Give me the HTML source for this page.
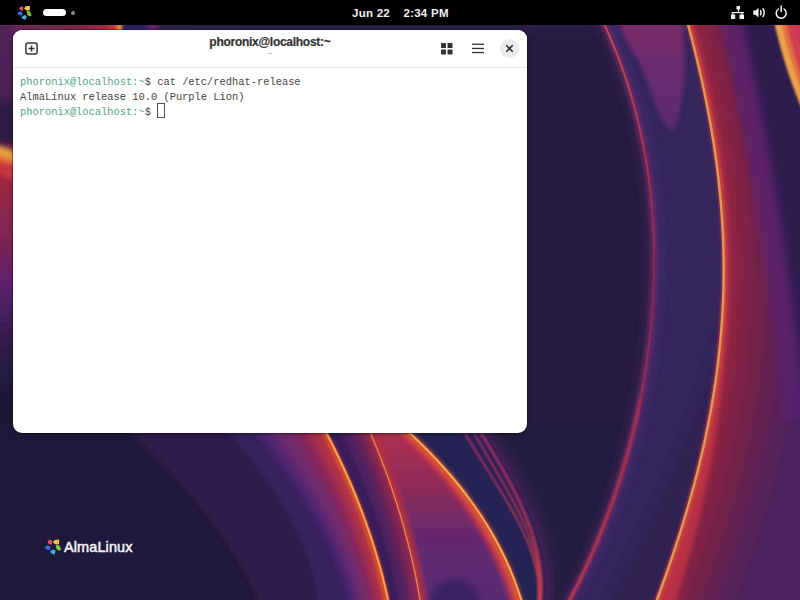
<!DOCTYPE html>
<html><head><meta charset="utf-8">
<style>
html,body{margin:0;padding:0;width:800px;height:600px;overflow:hidden;background:#221a3c;}
body{position:relative;font-family:"Liberation Sans",sans-serif;}
#bg{position:absolute;left:0;top:0;width:800px;height:600px;}
#bar{position:absolute;left:0;top:0;width:800px;height:25px;background:#000;color:#fff;}
.clock{position:absolute;top:6px;font-weight:bold;font-size:11.5px;letter-spacing:0.25px;line-height:14px;color:#f0f0f0;}
#win{position:absolute;left:13px;top:30px;width:513.8px;height:403px;background:#fff;border-radius:9px;overflow:hidden;box-shadow:0 0 0 1px rgba(10,5,25,0.35),0 2px 4px rgba(0,0,0,0.25);}
#hdr{position:absolute;left:0;top:0;width:100%;height:36.5px;background:#fff;border-bottom:1px solid #e9e9e9;}
#title{position:absolute;left:0;width:100%;top:4.5px;text-align:center;font-weight:bold;font-size:12px;letter-spacing:-0.28px;color:#333;-webkit-text-stroke:0.2px #333;}
#sub{position:absolute;left:0;width:100%;top:19px;text-align:center;font-size:8px;color:#888;}
#term{position:absolute;left:7px;top:44.7px;font-family:"Liberation Mono",monospace;font-size:10.4px;line-height:15px;color:#454545;white-space:pre;}
.g{color:#55a386;}
#cursor{position:absolute;left:144px;top:72.6px;width:8px;height:15.8px;border:1px solid #505050;box-sizing:border-box;}
#logo{position:absolute;left:45px;top:537px;}
#logotext{position:absolute;left:64px;top:539px;font-size:13px;font-weight:bold;color:#fff;}
</style></head><body>
<svg id="bg" width="800" height="600" viewBox="0 0 800 600">
  <defs>
    <filter id="lb" x="-50%" y="-50%" width="200%" height="200%"><feGaussianBlur stdDeviation="0.7"/></filter>
    <filter id="b1" x="-5%" y="-5%" width="110%" height="110%"><feGaussianBlur stdDeviation="0.8"/></filter>
    <filter id="b2" x="-10%" y="-10%" width="120%" height="120%"><feGaussianBlur stdDeviation="2"/></filter>
    <filter id="b3" x="-10%" y="-10%" width="120%" height="120%"><feGaussianBlur stdDeviation="3.5"/></filter>
    <filter id="b6" x="-20%" y="-20%" width="140%" height="140%"><feGaussianBlur stdDeviation="6"/></filter>
    <clipPath id="cb"><rect x="0" y="423" width="800" height="177"/></clipPath>
    <clipPath id="cr"><rect x="520" y="24" width="280" height="576"/></clipPath>
    <linearGradient id="gtop" x1="0" y1="0" x2="600" y2="0" gradientUnits="userSpaceOnUse">
      <stop offset="0" stop-color="#6a2a5a"/><stop offset="0.13" stop-color="#7a2848"/><stop offset="0.175" stop-color="#a02a40"/>
      <stop offset="0.19" stop-color="#c04030"/><stop offset="0.2" stop-color="#e09040"/><stop offset="0.207" stop-color="#2a2060"/>
      <stop offset="0.24" stop-color="#2a2060"/><stop offset="0.255" stop-color="#6a2a70"/><stop offset="0.27" stop-color="#2a2048"/>
      <stop offset="1" stop-color="#261c44"/>
    </linearGradient>
    <linearGradient id="gtongue" x1="0" y1="25" x2="0" y2="131" gradientUnits="userSpaceOnUse">
      <stop offset="0" stop-color="#78296a"/><stop offset="0.4" stop-color="#6a296f"/><stop offset="1" stop-color="#5e2a72"/>
    </linearGradient>
    <linearGradient id="gr2" x1="0" y1="433" x2="0" y2="600" gradientUnits="userSpaceOnUse">
      <stop offset="0" stop-color="#b83068"/><stop offset="0.5" stop-color="#c03858"/><stop offset="1" stop-color="#c84048"/>
    </linearGradient>
    <linearGradient id="gleft" x1="0" y1="20" x2="0" y2="445" gradientUnits="userSpaceOnUse">
      <stop offset="0" stop-color="#5e2460"/><stop offset="0.028" stop-color="#502058"/><stop offset="0.099" stop-color="#4e2058"/>
      <stop offset="0.176" stop-color="#4a2052"/><stop offset="0.195" stop-color="#3a1e4a"/><stop offset="0.212" stop-color="#2c1c44"/>
      <stop offset="0.282" stop-color="#2c1c44"/><stop offset="0.31" stop-color="#a82a40"/><stop offset="0.376" stop-color="#9e2640"/>
      <stop offset="0.452" stop-color="#8a264e"/><stop offset="0.541" stop-color="#782454"/><stop offset="0.6" stop-color="#62246a"/>
      <stop offset="0.64" stop-color="#582468"/><stop offset="0.706" stop-color="#402058"/><stop offset="0.776" stop-color="#2c1c48"/>
      <stop offset="0.847" stop-color="#221a3e"/><stop offset="0.906" stop-color="#1e1836"/><stop offset="1" stop-color="#1e1836"/>
    </linearGradient>
    <linearGradient id="gr1" x1="0" y1="25" x2="0" y2="600" gradientUnits="userSpaceOnUse">
      <stop offset="0" stop-color="#c84a50"/><stop offset="0.22" stop-color="#a83452"/><stop offset="0.45" stop-color="#7e2a5a"/><stop offset="0.7" stop-color="#9a3054"/><stop offset="1" stop-color="#b03450"/>
    </linearGradient>
    <linearGradient id="gdb" x1="0" y1="433" x2="0" y2="600" gradientUnits="userSpaceOnUse">
      <stop offset="0" stop-color="#b03050"/><stop offset="0.35" stop-color="#8a2a5a"/><stop offset="0.62" stop-color="#66286e"/><stop offset="1" stop-color="#582a76"/>
    </linearGradient>
  </defs>
  <rect width="800" height="600" fill="#241b3f"/>
  <rect x="0" y="20" width="600" height="14" fill="url(#gtop)"/>
  <g filter="url(#b2)">
    <rect x="-5" y="20" width="18" height="425" fill="url(#gleft)"/><rect x="13" y="31" width="22" height="414" fill="url(#gleft)"/>
    <path d="M-5 145 L35 160 L35 168 L-5 154 Z" fill="#e8a040"/>
    <path d="M-5 154 L35 168 L35 173 L-5 159 Z" fill="#e07038"/>
    <path d="M-5 159 L35 173 L35 187 L-5 173 Z" fill="#c83440"/>
    </g>
  <g clip-path="url(#cb)">
    <rect x="0" y="400" width="600" height="200" fill="#20183a"/>
    <g filter="url(#b2)">
      <path d="M67.5 380.0 L72.7 384.0 L77.8 388.0 L82.8 392.0 L87.8 396.0 L92.7 400.0 L97.5 404.0 L102.3 408.0 L107.0 412.0 L111.7 416.0 L116.3 420.0 L120.8 424.0 L125.2 428.0 L129.6 432.0 L134.0 436.0 L138.3 440.0 L142.5 444.0 L146.6 448.0 L150.7 452.0 L154.7 456.0 L158.7 460.0 L162.6 464.0 L166.4 468.0 L170.2 472.0 L173.9 476.0 L177.5 480.0 L181.1 484.0 L184.6 488.0 L188.1 492.0 L191.5 496.0 L194.8 500.0 L198.1 504.0 L201.3 508.0 L204.5 512.0 L207.5 516.0 L210.6 520.0 L213.5 524.0 L216.4 528.0 L219.2 532.0 L222.0 536.0 L224.7 540.0 L227.3 544.0 L229.9 548.0 L232.4 552.0 L234.9 556.0 L237.3 560.0 L239.6 564.0 L241.9 568.0 L244.1 572.0 L246.2 576.0 L248.3 580.0 L250.3 584.0 L252.3 588.0 L254.1 592.0 L256.0 596.0 L257.7 600.0 L259.4 604.0 L261.1 608.0 L262.6 612.0 L263.8 615.0 L840.0 615.0 L840.0 380.0 Z" fill="#2e1e4c"/>
      <path d="M172.9 380.0 L177.6 384.0 L182.1 388.0 L186.6 392.0 L191.1 396.0 L195.4 400.0 L199.7 404.0 L203.9 408.0 L208.0 412.0 L212.1 416.0 L216.1 420.0 L220.0 424.0 L223.8 428.0 L227.6 432.0 L231.2 436.0 L234.8 440.0 L238.4 444.0 L241.8 448.0 L245.2 452.0 L248.5 456.0 L251.8 460.0 L254.9 464.0 L258.0 468.0 L261.0 472.0 L264.0 476.0 L266.8 480.0 L269.6 484.0 L272.3 488.0 L275.0 492.0 L277.6 496.0 L280.1 500.0 L282.5 504.0 L284.8 508.0 L287.1 512.0 L289.3 516.0 L291.4 520.0 L293.5 524.0 L295.4 528.0 L297.3 532.0 L299.2 536.0 L300.9 540.0 L302.6 544.0 L304.2 548.0 L305.7 552.0 L307.2 556.0 L308.6 560.0 L309.9 564.0 L311.1 568.0 L312.2 572.0 L313.3 576.0 L314.3 580.0 L315.3 584.0 L316.1 588.0 L316.9 592.0 L317.6 596.0 L318.3 600.0 L318.8 604.0 L319.3 608.0 L319.7 612.0 L320.0 615.0 L840.0 615.0 L840.0 380.0 Z" fill="#37225e"/>
    </g>
    <g filter="url(#b3)">
<path d="M211.1 380.0 L214.9 384.0 L218.8 388.0 L222.6 392.0 L226.3 396.0 L230.0 400.0 L233.6 404.0 L237.2 408.0 L240.7 412.0 L244.2 416.0 L247.6 420.0 L251.0 424.0 L254.4 428.0 L257.6 432.0 L260.9 436.0 L264.1 440.0 L267.2 444.0 L270.3 448.0 L273.3 452.0 L276.3 456.0 L279.3 460.0 L282.1 464.0 L285.0 468.0 L287.8 472.0 L290.5 476.0 L293.2 480.0 L295.8 484.0 L298.4 488.0 L301.0 492.0 L303.5 496.0 L305.9 500.0 L308.3 504.0 L310.7 508.0 L312.9 512.0 L315.2 516.0 L317.4 520.0 L319.5 524.0 L321.6 528.0 L323.7 532.0 L325.7 536.0 L327.6 540.0 L329.5 544.0 L331.4 548.0 L333.2 552.0 L334.9 556.0 L336.6 560.0 L338.3 564.0 L339.9 568.0 L341.4 572.0 L342.9 576.0 L344.4 580.0 L345.8 584.0 L347.1 588.0 L348.5 592.0 L349.7 596.0 L350.9 600.0 L352.1 604.0 L353.2 608.0 L354.2 612.0 L355.0 615.0 L840.0 615.0 L840.0 380.0 Z" fill="#562874"/>
<path d="M231.3 380.0 L234.9 384.0 L238.3 388.0 L241.8 392.0 L245.2 396.0 L248.5 400.0 L251.8 404.0 L255.1 408.0 L258.3 412.0 L261.5 416.0 L264.6 420.0 L267.7 424.0 L270.7 428.0 L273.7 432.0 L276.7 436.0 L279.6 440.0 L282.4 444.0 L285.2 448.0 L288.0 452.0 L290.7 456.0 L293.4 460.0 L296.0 464.0 L298.6 468.0 L301.2 472.0 L303.7 476.0 L306.1 480.0 L308.6 484.0 L310.9 488.0 L313.2 492.0 L315.5 496.0 L317.8 500.0 L320.0 504.0 L322.1 508.0 L324.2 512.0 L326.3 516.0 L328.3 520.0 L330.2 524.0 L332.2 528.0 L334.0 532.0 L335.9 536.0 L337.7 540.0 L339.4 544.0 L341.1 548.0 L342.8 552.0 L344.4 556.0 L346.0 560.0 L347.5 564.0 L349.0 568.0 L350.4 572.0 L351.8 576.0 L353.1 580.0 L354.4 584.0 L355.7 588.0 L356.9 592.0 L358.1 596.0 L359.2 600.0 L360.3 604.0 L361.3 608.0 L362.3 612.0 L363.0 615.0 L840.0 615.0 L840.0 380.0 Z" fill="#702a6c"/>
<path d="M255.7 380.0 L258.8 384.0 L261.8 388.0 L264.8 392.0 L267.8 396.0 L270.8 400.0 L273.7 404.0 L276.6 408.0 L279.4 412.0 L282.2 416.0 L284.9 420.0 L287.7 424.0 L290.3 428.0 L293.0 432.0 L295.6 436.0 L298.1 440.0 L300.7 444.0 L303.2 448.0 L305.6 452.0 L308.0 456.0 L310.4 460.0 L312.7 464.0 L315.0 468.0 L317.3 472.0 L319.5 476.0 L321.7 480.0 L323.8 484.0 L325.9 488.0 L328.0 492.0 L330.0 496.0 L332.0 500.0 L333.9 504.0 L335.8 508.0 L337.7 512.0 L339.5 516.0 L341.3 520.0 L343.1 524.0 L344.8 528.0 L346.5 532.0 L348.1 536.0 L349.7 540.0 L351.3 544.0 L352.8 548.0 L354.3 552.0 L355.8 556.0 L357.2 560.0 L358.5 564.0 L359.9 568.0 L361.2 572.0 L362.4 576.0 L363.6 580.0 L364.8 584.0 L365.9 588.0 L367.0 592.0 L368.1 596.0 L369.1 600.0 L370.1 604.0 L371.1 608.0 L372.0 612.0 L372.6 615.0 L840.0 615.0 L840.0 380.0 Z" fill="#882858"/>
<path d="M274.3 380.0 L277.1 384.0 L279.8 388.0 L282.5 392.0 L285.2 396.0 L287.9 400.0 L290.5 404.0 L293.0 408.0 L295.6 412.0 L298.1 416.0 L300.6 420.0 L303.0 424.0 L305.4 428.0 L307.8 432.0 L310.1 436.0 L312.4 440.0 L314.7 444.0 L316.9 448.0 L319.1 452.0 L321.3 456.0 L323.4 460.0 L325.5 464.0 L327.6 468.0 L329.6 472.0 L331.6 476.0 L333.6 480.0 L335.5 484.0 L337.4 488.0 L339.3 492.0 L341.1 496.0 L342.9 500.0 L344.6 504.0 L346.4 508.0 L348.1 512.0 L349.7 516.0 L351.4 520.0 L352.9 524.0 L354.5 528.0 L356.0 532.0 L357.5 536.0 L359.0 540.0 L360.4 544.0 L361.8 548.0 L363.1 552.0 L364.5 556.0 L365.7 560.0 L367.0 564.0 L368.2 568.0 L369.4 572.0 L370.6 576.0 L371.7 580.0 L372.8 584.0 L373.8 588.0 L374.8 592.0 L375.8 596.0 L376.8 600.0 L377.7 604.0 L378.5 608.0 L379.4 612.0 L380.0 615.0 L840.0 615.0 L840.0 380.0 Z" fill="#b03048"/>
    </g>
    <g filter="url(#b2)">
<path d="M296.1 380.0 L298.6 384.0 L301.0 388.0 L303.4 392.0 L305.8 396.0 L308.2 400.0 L310.5 404.0 L312.8 408.0 L315.0 412.0 L317.3 416.0 L319.5 420.0 L321.6 424.0 L323.8 428.0 L325.9 432.0 L328.0 436.0 L330.0 440.0 L332.1 444.0 L334.1 448.0 L336.0 452.0 L338.0 456.0 L339.9 460.0 L341.7 464.0 L343.6 468.0 L345.4 472.0 L347.2 476.0 L349.0 480.0 L350.7 484.0 L352.4 488.0 L354.1 492.0 L355.7 496.0 L357.3 500.0 L358.9 504.0 L360.5 508.0 L362.0 512.0 L363.5 516.0 L364.9 520.0 L366.4 524.0 L367.8 528.0 L369.2 532.0 L370.5 536.0 L371.8 540.0 L373.1 544.0 L374.4 548.0 L375.6 552.0 L376.8 556.0 L378.0 560.0 L379.1 564.0 L380.2 568.0 L381.3 572.0 L382.3 576.0 L383.4 580.0 L384.4 584.0 L385.3 588.0 L386.3 592.0 L387.2 596.0 L388.0 600.0 L388.9 604.0 L389.7 608.0 L390.5 612.0 L391.1 615.0 L840.0 615.0 L840.0 380.0 Z" fill="#3a1e5a"/>
<path d="M313.4 380.0 L315.7 384.0 L318.0 388.0 L320.3 392.0 L322.5 396.0 L324.7 400.0 L326.9 404.0 L329.0 408.0 L331.2 412.0 L333.3 416.0 L335.3 420.0 L337.3 424.0 L339.4 428.0 L341.3 432.0 L343.3 436.0 L345.2 440.0 L347.1 444.0 L349.0 448.0 L350.8 452.0 L352.6 456.0 L354.4 460.0 L356.2 464.0 L357.9 468.0 L359.6 472.0 L361.3 476.0 L362.9 480.0 L364.5 484.0 L366.1 488.0 L367.7 492.0 L369.2 496.0 L370.7 500.0 L372.2 504.0 L373.6 508.0 L375.1 512.0 L376.4 516.0 L377.8 520.0 L379.2 524.0 L380.5 528.0 L381.7 532.0 L383.0 536.0 L384.2 540.0 L385.4 544.0 L386.6 548.0 L387.7 552.0 L388.8 556.0 L389.9 560.0 L391.0 564.0 L392.0 568.0 L393.0 572.0 L394.0 576.0 L394.9 580.0 L395.8 584.0 L396.7 588.0 L397.6 592.0 L398.4 596.0 L399.2 600.0 L400.0 604.0 L400.8 608.0 L401.5 612.0 L402.0 615.0 L840.0 615.0 L840.0 380.0 Z" fill="#502260"/>
<path d="M325.8 380.0 L328.0 384.0 L330.2 388.0 L332.3 392.0 L334.4 396.0 L336.5 400.0 L338.6 404.0 L340.7 408.0 L342.7 412.0 L344.7 416.0 L346.6 420.0 L348.6 424.0 L350.5 428.0 L352.4 432.0 L354.2 436.0 L356.0 440.0 L357.9 444.0 L359.6 448.0 L361.4 452.0 L363.1 456.0 L364.8 460.0 L366.5 464.0 L368.1 468.0 L369.7 472.0 L371.3 476.0 L372.9 480.0 L374.4 484.0 L375.9 488.0 L377.4 492.0 L378.9 496.0 L380.3 500.0 L381.7 504.0 L383.1 508.0 L384.4 512.0 L385.7 516.0 L387.0 520.0 L388.3 524.0 L389.5 528.0 L390.7 532.0 L391.9 536.0 L393.1 540.0 L394.2 544.0 L395.3 548.0 L396.4 552.0 L397.4 556.0 L398.5 560.0 L399.5 564.0 L400.4 568.0 L401.4 572.0 L402.3 576.0 L403.2 580.0 L404.0 584.0 L404.9 588.0 L405.7 592.0 L406.5 596.0 L407.2 600.0 L408.0 604.0 L408.7 608.0 L409.3 612.0 L409.8 615.0 L840.0 615.0 L840.0 380.0 Z" fill="#6a2458"/>
<path d="M335.6 380.0 L337.8 384.0 L339.9 388.0 L341.9 392.0 L344.0 396.0 L346.0 400.0 L348.0 404.0 L349.9 408.0 L351.9 412.0 L353.8 416.0 L355.7 420.0 L357.5 424.0 L359.4 428.0 L361.2 432.0 L363.0 436.0 L364.7 440.0 L366.4 444.0 L368.2 448.0 L369.8 452.0 L371.5 456.0 L373.1 460.0 L374.7 464.0 L376.3 468.0 L377.8 472.0 L379.4 476.0 L380.8 480.0 L382.3 484.0 L383.8 488.0 L385.2 492.0 L386.6 496.0 L387.9 500.0 L389.3 504.0 L390.6 508.0 L391.9 512.0 L393.1 516.0 L394.4 520.0 L395.6 524.0 L396.8 528.0 L397.9 532.0 L399.1 536.0 L400.2 540.0 L401.2 544.0 L402.3 548.0 L403.3 552.0 L404.3 556.0 L405.3 560.0 L406.2 564.0 L407.2 568.0 L408.1 572.0 L408.9 576.0 L409.8 580.0 L410.6 584.0 L411.4 588.0 L412.2 592.0 L412.9 596.0 L413.6 600.0 L414.3 604.0 L415.0 608.0 L415.6 612.0 L416.1 615.0 L840.0 615.0 L840.0 380.0 Z" fill="#8a2850"/>
    </g>
    <g filter="url(#b3)">
      <path d="M345.5 380.0 L347.6 384.0 L349.6 388.0 L351.5 392.0 L353.5 396.0 L355.4 400.0 L357.3 404.0 L359.2 408.0 L361.1 412.0 L362.9 416.0 L364.7 420.0 L366.5 424.0 L368.3 428.0 L370.0 432.0 L371.7 436.0 L373.4 440.0 L375.0 444.0 L376.7 448.0 L378.3 452.0 L379.9 456.0 L381.4 460.0 L382.9 464.0 L384.5 468.0 L385.9 472.0 L387.4 476.0 L388.8 480.0 L390.2 484.0 L391.6 488.0 L393.0 492.0 L394.3 496.0 L395.6 500.0 L396.9 504.0 L398.1 508.0 L399.4 512.0 L400.6 516.0 L401.7 520.0 L402.9 524.0 L404.0 528.0 L405.1 532.0 L406.2 536.0 L407.3 540.0 L408.3 544.0 L409.3 548.0 L410.3 552.0 L411.2 556.0 L412.1 560.0 L413.0 564.0 L413.9 568.0 L414.8 572.0 L415.6 576.0 L416.4 580.0 L417.2 584.0 L417.9 588.0 L418.6 592.0 L419.3 596.0 L420.0 600.0 L420.7 604.0 L421.3 608.0 L421.9 612.0 L422.3 615.0 L840.0 615.0 L840.0 380.0 Z" fill="url(#gdb)"/>
      <ellipse cx="455" cy="606" rx="26" ry="27" fill="#3a2466"/>
    </g>
    <g filter="url(#b2)">
      <path d="M363.8 418.0 L365.6 422.0 L367.4 426.0 L369.1 430.0 L370.9 434.0 L372.5 438.0 L374.2 442.0 L375.9 446.0 L377.5 450.0 L379.1 454.0 L380.6 458.0 L382.2 462.0 L383.7 466.0 L385.2 470.0 L386.7 474.0 L388.1 478.0 L389.5 482.0 L390.9 486.0 L392.3 490.0 L393.6 494.0 L394.9 498.0 L396.2 502.0 L397.5 506.0 L398.7 510.0 L400.0 514.0 L401.1 518.0 L402.3 522.0 L403.5 526.0 L404.6 530.0 L405.7 534.0 L406.7 538.0 L407.8 542.0 L408.8 546.0 L409.8 550.0 L410.7 554.0 L411.7 558.0 L412.6 562.0 L413.5 566.0 L414.3 570.0 L415.2 574.0 L416.0 578.0 L416.8 582.0 L417.5 586.0 L418.3 590.0 L419.0 594.0 L419.7 598.0 L420.3 602.0 L421.0 606.0 L421.6 610.0 L422.2 614.0 L422.3 615.0 L429.3 615.0 L429.2 614.0 L428.6 610.0 L428.0 606.0 L427.3 602.0 L426.7 598.0 L426.0 594.0 L425.3 590.0 L424.5 586.0 L423.8 582.0 L423.0 578.0 L422.2 574.0 L421.3 570.0 L420.5 566.0 L419.6 562.0 L418.7 558.0 L417.7 554.0 L416.8 550.0 L415.8 546.0 L414.8 542.0 L413.7 538.0 L412.7 534.0 L411.6 530.0 L410.5 526.0 L409.3 522.0 L408.1 518.0 L407.0 514.0 L405.7 510.0 L404.5 506.0 L403.2 502.0 L401.9 498.0 L400.6 494.0 L399.3 490.0 L397.9 486.0 L396.5 482.0 L395.1 478.0 L393.7 474.0 L392.2 470.0 L390.7 466.0 L389.2 462.0 L387.6 458.0 L386.1 454.0 L384.5 450.0 L382.9 446.0 L381.2 442.0 L379.5 438.0 L377.9 434.0 L376.1 430.0 L374.4 426.0 L372.6 422.0 L370.8 418.0 Z" fill="#b03048" opacity="0.8"/>
      <path d="M380.7 418.0 L385.3 422.0 L389.9 426.0 L394.3 430.0 L398.7 434.0 L402.9 438.0 L407.1 442.0 L411.2 446.0 L415.2 450.0 L419.1 454.0 L422.9 458.0 L426.7 462.0 L430.3 466.0 L433.9 470.0 L437.4 474.0 L440.8 478.0 L444.1 482.0 L447.4 486.0 L450.6 490.0 L453.7 494.0 L456.7 498.0 L459.6 502.0 L462.5 506.0 L465.2 510.0 L467.9 514.0 L470.6 518.0 L473.1 522.0 L475.6 526.0 L478.0 530.0 L480.4 534.0 L482.6 538.0 L484.8 542.0 L486.9 546.0 L489.0 550.0 L491.0 554.0 L492.9 558.0 L494.8 562.0 L496.6 566.0 L498.3 570.0 L500.0 574.0 L501.6 578.0 L503.1 582.0 L504.6 586.0 L506.0 590.0 L507.3 594.0 L508.6 598.0 L509.9 602.0 L511.0 606.0 L512.2 610.0 L513.2 614.0 L513.5 615.0 L525.5 615.0 L525.2 614.0 L524.2 610.0 L523.0 606.0 L521.9 602.0 L520.6 598.0 L519.3 594.0 L518.0 590.0 L516.6 586.0 L515.1 582.0 L513.6 578.0 L512.0 574.0 L510.3 570.0 L508.6 566.0 L506.8 562.0 L504.9 558.0 L503.0 554.0 L501.0 550.0 L498.9 546.0 L496.8 542.0 L494.6 538.0 L492.4 534.0 L490.0 530.0 L487.6 526.0 L485.1 522.0 L482.6 518.0 L479.9 514.0 L477.2 510.0 L474.5 506.0 L471.6 502.0 L468.7 498.0 L465.7 494.0 L462.6 490.0 L459.4 486.0 L456.1 482.0 L452.8 478.0 L449.4 474.0 L445.9 470.0 L442.3 466.0 L438.7 462.0 L434.9 458.0 L431.1 454.0 L427.2 450.0 L423.2 446.0 L419.1 442.0 L414.9 438.0 L410.7 434.0 L406.3 430.0 L401.9 426.0 L397.3 422.0 L392.7 418.0 Z" fill="#c03450" opacity="0.85"/>
    </g>
    <g filter="url(#b1)">
      <path d="M344.0 380.0 L349.6 384.0 L355.0 388.0 L360.4 392.0 L365.6 396.0 L370.7 400.0 L375.8 404.0 L380.7 408.0 L385.6 412.0 L390.4 416.0 L395.0 420.0 L399.6 424.0 L404.1 428.0 L408.5 432.0 L412.8 436.0 L417.0 440.0 L421.2 444.0 L425.2 448.0 L429.2 452.0 L433.0 456.0 L436.8 460.0 L440.5 464.0 L444.1 468.0 L447.7 472.0 L451.1 476.0 L454.5 480.0 L457.8 484.0 L461.0 488.0 L464.1 492.0 L467.2 496.0 L470.1 500.0 L473.0 504.0 L475.9 508.0 L478.6 512.0 L481.3 516.0 L483.9 520.0 L486.4 524.0 L488.8 528.0 L491.2 532.0 L493.5 536.0 L495.7 540.0 L497.9 544.0 L500.0 548.0 L502.0 552.0 L504.0 556.0 L505.9 560.0 L507.7 564.0 L509.4 568.0 L511.1 572.0 L512.8 576.0 L514.3 580.0 L515.8 584.0 L517.3 588.0 L518.7 592.0 L520.0 596.0 L521.3 600.0 L522.5 604.0 L523.6 608.0 L524.7 612.0 L525.5 615.0 L840.0 615.0 L840.0 380.0 Z" fill="#262254"/>
    </g>
    <g filter="url(#b3)">
      <path d="M447.8 380.0 L450.3 384.0 L452.7 388.0 L455.2 392.0 L457.7 396.0 L460.2 400.0 L462.7 404.0 L465.2 408.0 L467.7 412.0 L470.3 416.0 L472.8 420.0 L475.3 424.0 L477.8 428.0 L480.3 432.0 L482.8 436.0 L485.2 440.0 L487.7 444.0 L490.1 448.0 L492.5 452.0 L494.9 456.0 L497.2 460.0 L499.5 464.0 L501.8 468.0 L504.1 472.0 L506.3 476.0 L508.4 480.0 L510.6 484.0 L512.6 488.0 L514.7 492.0 L516.6 496.0 L518.5 500.0 L520.4 504.0 L522.2 508.0 L523.9 512.0 L525.6 516.0 L527.2 520.0 L528.7 524.0 L530.2 528.0 L531.6 532.0 L532.9 536.0 L534.1 540.0 L535.2 544.0 L536.3 548.0 L537.2 552.0 L538.1 556.0 L538.9 560.0 L539.6 564.0 L540.1 568.0 L540.6 572.0 L541.0 576.0 L541.2 580.0 L541.4 584.0 L541.4 588.0 L541.3 592.0 L541.1 596.0 L540.8 600.0 L540.4 604.0 L539.8 608.0 L539.1 612.0 L538.5 615.0 L840.0 615.0 L840.0 380.0 Z" fill="#472058"/>
    </g>
    <g filter="url(#b6)">
      <path d="M447.8 380.0 L450.3 384.0 L452.7 388.0 L455.2 392.0 L457.7 396.0 L460.2 400.0 L462.7 404.0 L465.2 408.0 L467.7 412.0 L470.3 416.0 L472.8 420.0 L475.3 424.0 L477.8 428.0 L480.3 432.0 L482.8 436.0 L485.2 440.0 L487.7 444.0 L490.1 448.0 L492.5 452.0 L494.9 456.0 L497.2 460.0 L499.5 464.0 L501.8 468.0 L504.1 472.0 L506.3 476.0 L508.4 480.0 L510.6 484.0 L512.6 488.0 L514.7 492.0 L516.6 496.0 L518.5 500.0 L520.4 504.0 L522.2 508.0 L523.9 512.0 L525.6 516.0 L527.2 520.0 L528.7 524.0 L530.2 528.0 L531.6 532.0 L532.9 536.0 L534.1 540.0 L535.2 544.0 L536.3 548.0 L537.2 552.0 L538.1 556.0 L538.9 560.0 L539.6 564.0 L540.1 568.0 L540.6 572.0 L541.0 576.0 L541.2 580.0 L541.4 584.0 L541.4 588.0 L541.3 592.0 L541.1 596.0 L540.8 600.0 L540.4 604.0 L539.8 608.0 L539.1 612.0 L538.5 615.0 L840.0 615.0 L840.0 380.0 Z" fill="#241b3f" transform="translate(11,0)"/>
    </g>
    <g fill="none" stroke-linecap="round">
      <path d="M296.1 380.0 L298.0 383.0 L299.8 386.0 L301.6 389.0 L303.4 392.0 L305.2 395.0 L307.0 398.0 L308.8 401.0 L310.5 404.0 L312.2 407.0 L313.9 410.0 L315.6 413.0 L317.3 416.0 L318.9 419.0 L320.6 422.0 L322.2 425.0 L323.8 428.0 L325.4 431.0 L326.9 434.0 L328.5 437.0 L330.0 440.0 L331.6 443.0 L333.1 446.0 L334.6 449.0 L336.0 452.0 L337.5 455.0 L338.9 458.0 L340.3 461.0 L341.7 464.0 L343.1 467.0 L344.5 470.0 L345.9 473.0 L347.2 476.0 L348.5 479.0 L349.8 482.0 L351.1 485.0 L352.4 488.0 L353.6 491.0 L354.9 494.0 L356.1 497.0 L357.3 500.0 L358.5 503.0 L359.7 506.0 L360.8 509.0 L362.0 512.0 L363.1 515.0 L364.2 518.0 L365.3 521.0 L366.4 524.0 L367.4 527.0 L368.5 530.0 L369.5 533.0 L370.5 536.0 L371.5 539.0 L372.5 542.0 L373.4 545.0 L374.4 548.0 L375.3 551.0 L376.2 554.0 L377.1 557.0 L378.0 560.0 L378.8 563.0 L379.7 566.0 L380.5 569.0 L381.3 572.0 L382.1 575.0 L382.9 578.0 L383.6 581.0 L384.4 584.0 L385.1 587.0 L385.8 590.0 L386.5 593.0 L387.2 596.0 L387.8 599.0 L388.5 602.0 L389.1 605.0 L389.7 608.0 L390.3 611.0 L390.9 614.0 L391.1 615.0" stroke="#d8502c" stroke-width="6" filter="url(#b1)" transform="translate(-1.8,0)" opacity="0.9"/>
      <path d="M296.1 380.0 L298.0 383.0 L299.8 386.0 L301.6 389.0 L303.4 392.0 L305.2 395.0 L307.0 398.0 L308.8 401.0 L310.5 404.0 L312.2 407.0 L313.9 410.0 L315.6 413.0 L317.3 416.0 L318.9 419.0 L320.6 422.0 L322.2 425.0 L323.8 428.0 L325.4 431.0 L326.9 434.0 L328.5 437.0 L330.0 440.0 L331.6 443.0 L333.1 446.0 L334.6 449.0 L336.0 452.0 L337.5 455.0 L338.9 458.0 L340.3 461.0 L341.7 464.0 L343.1 467.0 L344.5 470.0 L345.9 473.0 L347.2 476.0 L348.5 479.0 L349.8 482.0 L351.1 485.0 L352.4 488.0 L353.6 491.0 L354.9 494.0 L356.1 497.0 L357.3 500.0 L358.5 503.0 L359.7 506.0 L360.8 509.0 L362.0 512.0 L363.1 515.0 L364.2 518.0 L365.3 521.0 L366.4 524.0 L367.4 527.0 L368.5 530.0 L369.5 533.0 L370.5 536.0 L371.5 539.0 L372.5 542.0 L373.4 545.0 L374.4 548.0 L375.3 551.0 L376.2 554.0 L377.1 557.0 L378.0 560.0 L378.8 563.0 L379.7 566.0 L380.5 569.0 L381.3 572.0 L382.1 575.0 L382.9 578.0 L383.6 581.0 L384.4 584.0 L385.1 587.0 L385.8 590.0 L386.5 593.0 L387.2 596.0 L387.8 599.0 L388.5 602.0 L389.1 605.0 L389.7 608.0 L390.3 611.0 L390.9 614.0 L391.1 615.0" stroke="#f2a24e" stroke-width="2.1"/>
      <path d="M345.5 380.0 L347.0 383.0 L348.6 386.0 L350.1 389.0 L351.5 392.0 L353.0 395.0 L354.5 398.0 L355.9 401.0 L357.3 404.0 L358.8 407.0 L360.2 410.0 L361.5 413.0 L362.9 416.0 L364.3 419.0 L365.6 422.0 L367.0 425.0 L368.3 428.0 L369.6 431.0 L370.9 434.0 L372.1 437.0 L373.4 440.0 L374.6 443.0 L375.9 446.0 L377.1 449.0 L378.3 452.0 L379.5 455.0 L380.6 458.0 L381.8 461.0 L382.9 464.0 L384.1 467.0 L385.2 470.0 L386.3 473.0 L387.4 476.0 L388.5 479.0 L389.5 482.0 L390.6 485.0 L391.6 488.0 L392.6 491.0 L393.6 494.0 L394.6 497.0 L395.6 500.0 L396.6 503.0 L397.5 506.0 L398.4 509.0 L399.4 512.0 L400.3 515.0 L401.1 518.0 L402.0 521.0 L402.9 524.0 L403.7 527.0 L404.6 530.0 L405.4 533.0 L406.2 536.0 L407.0 539.0 L407.8 542.0 L408.5 545.0 L409.3 548.0 L410.0 551.0 L410.7 554.0 L411.4 557.0 L412.1 560.0 L412.8 563.0 L413.5 566.0 L414.1 569.0 L414.8 572.0 L415.4 575.0 L416.0 578.0 L416.6 581.0 L417.2 584.0 L417.7 587.0 L418.3 590.0 L418.8 593.0 L419.3 596.0 L419.9 599.0 L420.3 602.0 L420.8 605.0 L421.3 608.0 L421.7 611.0 L422.2 614.0 L422.3 615.0" stroke="#b83838" stroke-width="3.2" filter="url(#b1)" transform="translate(0.8,0)"/>
      <path d="M345.5 380.0 L347.0 383.0 L348.6 386.0 L350.1 389.0 L351.5 392.0 L353.0 395.0 L354.5 398.0 L355.9 401.0 L357.3 404.0 L358.8 407.0 L360.2 410.0 L361.5 413.0 L362.9 416.0 L364.3 419.0 L365.6 422.0 L367.0 425.0 L368.3 428.0 L369.6 431.0 L370.9 434.0 L372.1 437.0 L373.4 440.0 L374.6 443.0 L375.9 446.0 L377.1 449.0 L378.3 452.0 L379.5 455.0 L380.6 458.0 L381.8 461.0 L382.9 464.0 L384.1 467.0 L385.2 470.0 L386.3 473.0 L387.4 476.0 L388.5 479.0 L389.5 482.0 L390.6 485.0 L391.6 488.0 L392.6 491.0 L393.6 494.0 L394.6 497.0 L395.6 500.0 L396.6 503.0 L397.5 506.0 L398.4 509.0 L399.4 512.0 L400.3 515.0 L401.1 518.0 L402.0 521.0 L402.9 524.0 L403.7 527.0 L404.6 530.0 L405.4 533.0 L406.2 536.0 L407.0 539.0 L407.8 542.0 L408.5 545.0 L409.3 548.0 L410.0 551.0 L410.7 554.0 L411.4 557.0 L412.1 560.0 L412.8 563.0 L413.5 566.0 L414.1 569.0 L414.8 572.0 L415.4 575.0 L416.0 578.0 L416.6 581.0 L417.2 584.0 L417.7 587.0 L418.3 590.0 L418.8 593.0 L419.3 596.0 L419.9 599.0 L420.3 602.0 L420.8 605.0 L421.3 608.0 L421.7 611.0 L422.2 614.0 L422.3 615.0" stroke="#e89050" stroke-width="1.3" opacity="0.9"/>
      <path d="M344.0 380.0 L348.2 383.0 L352.3 386.0 L356.4 389.0 L360.4 392.0 L364.3 395.0 L368.2 398.0 L372.0 401.0 L375.8 404.0 L379.5 407.0 L383.2 410.0 L386.8 413.0 L390.4 416.0 L393.9 419.0 L397.3 422.0 L400.8 425.0 L404.1 428.0 L407.4 431.0 L410.7 434.0 L413.9 437.0 L417.0 440.0 L420.1 443.0 L423.2 446.0 L426.2 449.0 L429.2 452.0 L432.1 455.0 L434.9 458.0 L437.8 461.0 L440.5 464.0 L443.2 467.0 L445.9 470.0 L448.5 473.0 L451.1 476.0 L453.7 479.0 L456.1 482.0 L458.6 485.0 L461.0 488.0 L463.3 491.0 L465.7 494.0 L467.9 497.0 L470.1 500.0 L472.3 503.0 L474.5 506.0 L476.5 509.0 L478.6 512.0 L480.6 515.0 L482.6 518.0 L484.5 521.0 L486.4 524.0 L488.2 527.0 L490.0 530.0 L491.8 533.0 L493.5 536.0 L495.2 539.0 L496.8 542.0 L498.4 545.0 L500.0 548.0 L501.5 551.0 L503.0 554.0 L504.4 557.0 L505.9 560.0 L507.2 563.0 L508.6 566.0 L509.9 569.0 L511.1 572.0 L512.4 575.0 L513.6 578.0 L514.7 581.0 L515.8 584.0 L516.9 587.0 L518.0 590.0 L519.0 593.0 L520.0 596.0 L521.0 599.0 L521.9 602.0 L522.8 605.0 L523.6 608.0 L524.4 611.0 L525.2 614.0 L525.5 615.0" stroke="#e05a30" stroke-width="7" filter="url(#b2)" transform="translate(-2.5,0)" opacity="0.9"/>
      <path d="M344.0 380.0 L348.2 383.0 L352.3 386.0 L356.4 389.0 L360.4 392.0 L364.3 395.0 L368.2 398.0 L372.0 401.0 L375.8 404.0 L379.5 407.0 L383.2 410.0 L386.8 413.0 L390.4 416.0 L393.9 419.0 L397.3 422.0 L400.8 425.0 L404.1 428.0 L407.4 431.0 L410.7 434.0 L413.9 437.0 L417.0 440.0 L420.1 443.0 L423.2 446.0 L426.2 449.0 L429.2 452.0 L432.1 455.0 L434.9 458.0 L437.8 461.0 L440.5 464.0 L443.2 467.0 L445.9 470.0 L448.5 473.0 L451.1 476.0 L453.7 479.0 L456.1 482.0 L458.6 485.0 L461.0 488.0 L463.3 491.0 L465.7 494.0 L467.9 497.0 L470.1 500.0 L472.3 503.0 L474.5 506.0 L476.5 509.0 L478.6 512.0 L480.6 515.0 L482.6 518.0 L484.5 521.0 L486.4 524.0 L488.2 527.0 L490.0 530.0 L491.8 533.0 L493.5 536.0 L495.2 539.0 L496.8 542.0 L498.4 545.0 L500.0 548.0 L501.5 551.0 L503.0 554.0 L504.4 557.0 L505.9 560.0 L507.2 563.0 L508.6 566.0 L509.9 569.0 L511.1 572.0 L512.4 575.0 L513.6 578.0 L514.7 581.0 L515.8 584.0 L516.9 587.0 L518.0 590.0 L519.0 593.0 L520.0 596.0 L521.0 599.0 L521.9 602.0 L522.8 605.0 L523.6 608.0 L524.4 611.0 L525.2 614.0 L525.5 615.0" stroke="#f4a850" stroke-width="2.1"/>
      <g filter="url(#b1)">
      <path d="M440.9 380.0 L441.8 383.0 L442.8 386.0 L443.9 389.0 L445.0 392.0 L446.1 395.0 L447.4 398.0 L448.6 401.0 L450.0 404.0 L451.3 407.0 L452.8 410.0 L454.2 413.0 L455.8 416.0 L457.3 419.0 L458.9 422.0 L460.5 425.0 L462.2 428.0 L463.9 431.0 L465.6 434.0 L467.3 437.0 L469.1 440.0 L470.9 443.0 L472.7 446.0 L474.5 449.0 L476.4 452.0 L478.3 455.0 L480.1 458.0 L482.0 461.0 L483.9 464.0 L485.8 467.0 L487.7 470.0 L489.6 473.0 L491.4 476.0 L493.3 479.0 L495.2 482.0 L497.1 485.0 L498.9 488.0 L500.7 491.0 L502.6 494.0 L504.4 497.0 L506.1 500.0 L507.9 503.0 L509.6 506.0 L511.3 509.0 L513.0 512.0 L514.7 515.0 L516.3 518.0 L517.8 521.0 L519.4 524.0 L520.8 527.0 L522.3 530.0 L523.7 533.0 L525.0 536.0 L526.3 539.0 L527.6 542.0 L528.8 545.0 L529.9 548.0 L531.0 551.0 L532.0 554.0 L532.9 557.0 L533.8 560.0 L534.6 563.0 L535.4 566.0 L536.0 569.0 L536.6 572.0 L537.1 575.0 L537.6 578.0 L537.9 581.0 L538.2 584.0 L538.3 587.0 L538.4 590.0 L538.4 593.0 L538.3 596.0 L538.1 599.0 L537.8 602.0 L537.4 605.0 L536.9 608.0 L536.3 611.0 L535.6 614.0 L535.4 615.0" stroke="url(#gr2)" stroke-width="1.7"/>
      <path d="M447.4 380.0 L448.6 383.0 L449.9 386.0 L451.2 389.0 L452.5 392.0 L453.9 395.0 L455.3 398.0 L456.7 401.0 L458.2 404.0 L459.7 407.0 L461.3 410.0 L462.9 413.0 L464.4 416.0 L466.1 419.0 L467.7 422.0 L469.4 425.0 L471.1 428.0 L472.8 431.0 L474.5 434.0 L476.2 437.0 L478.0 440.0 L479.7 443.0 L481.5 446.0 L483.2 449.0 L485.0 452.0 L486.8 455.0 L488.6 458.0 L490.3 461.0 L492.1 464.0 L493.9 467.0 L495.6 470.0 L497.4 473.0 L499.1 476.0 L500.9 479.0 L502.6 482.0 L504.3 485.0 L506.0 488.0 L507.6 491.0 L509.3 494.0 L510.9 497.0 L512.5 500.0 L514.1 503.0 L515.6 506.0 L517.1 509.0 L518.6 512.0 L520.0 515.0 L521.4 518.0 L522.8 521.0 L524.2 524.0 L525.4 527.0 L526.7 530.0 L527.9 533.0 L529.1 536.0 L530.2 539.0 L531.2 542.0 L532.2 545.0 L533.2 548.0 L534.1 551.0 L534.9 554.0 L535.7 557.0 L536.5 560.0 L537.1 563.0 L537.7 566.0 L538.2 569.0 L538.7 572.0 L539.1 575.0 L539.4 578.0 L539.7 581.0 L539.8 584.0 L539.9 587.0 L539.9 590.0 L539.9 593.0 L539.7 596.0 L539.5 599.0 L539.2 602.0 L538.8 605.0 L538.3 608.0 L537.7 611.0 L537.0 614.0 L536.7 615.0" stroke="url(#gr2)" stroke-width="1.7"/>
      <path d="M447.8 380.0 L449.7 383.0 L451.5 386.0 L453.4 389.0 L455.2 392.0 L457.1 395.0 L458.9 398.0 L460.8 401.0 L462.7 404.0 L464.6 407.0 L466.5 410.0 L468.4 413.0 L470.3 416.0 L472.1 419.0 L474.0 422.0 L475.9 425.0 L477.8 428.0 L479.7 431.0 L481.5 434.0 L483.4 437.0 L485.2 440.0 L487.1 443.0 L488.9 446.0 L490.7 449.0 L492.5 452.0 L494.3 455.0 L496.0 458.0 L497.8 461.0 L499.5 464.0 L501.3 467.0 L502.9 470.0 L504.6 473.0 L506.3 476.0 L507.9 479.0 L509.5 482.0 L511.1 485.0 L512.6 488.0 L514.2 491.0 L515.6 494.0 L517.1 497.0 L518.5 500.0 L519.9 503.0 L521.3 506.0 L522.6 509.0 L523.9 512.0 L525.2 515.0 L526.4 518.0 L527.6 521.0 L528.7 524.0 L529.8 527.0 L530.9 530.0 L531.9 533.0 L532.9 536.0 L533.8 539.0 L534.7 542.0 L535.5 545.0 L536.3 548.0 L537.0 551.0 L537.7 554.0 L538.3 557.0 L538.9 560.0 L539.4 563.0 L539.9 566.0 L540.3 569.0 L540.6 572.0 L540.9 575.0 L541.1 578.0 L541.3 581.0 L541.4 584.0 L541.4 587.0 L541.4 590.0 L541.3 593.0 L541.1 596.0 L540.9 599.0 L540.6 602.0 L540.2 605.0 L539.8 608.0 L539.3 611.0 L538.7 614.0 L538.5 615.0" stroke="url(#gr2)" stroke-width="2.2"/>
      </g>
    </g>
  </g>
  <g clip-path="url(#cr)">
    <g filter="url(#b1)">
      <path d="M592.2 0.0 L594.3 4.0 L596.3 8.0 L598.3 12.0 L600.3 16.0 L602.2 20.0 L604.1 24.0 L605.9 28.0 L607.7 32.0 L609.5 36.0 L611.2 40.0 L612.9 44.0 L614.5 48.0 L616.1 52.0 L617.7 56.0 L619.2 60.0 L620.7 64.0 L622.1 68.0 L623.6 72.0 L624.9 76.0 L626.3 80.0 L627.6 84.0 L628.8 88.0 L630.1 92.0 L631.3 96.0 L632.4 100.0 L633.5 104.0 L634.6 108.0 L635.7 112.0 L636.7 116.0 L637.7 120.0 L638.7 124.0 L639.6 128.0 L640.5 132.0 L641.4 136.0 L642.2 140.0 L643.0 144.0 L643.8 148.0 L644.5 152.0 L645.3 156.0 L645.9 160.0 L646.6 164.0 L647.2 168.0 L647.8 172.0 L648.4 176.0 L648.9 180.0 L649.4 184.0 L649.9 188.0 L650.4 192.0 L650.8 196.0 L651.2 200.0 L651.6 204.0 L651.9 208.0 L652.3 212.0 L652.6 216.0 L652.8 220.0 L653.1 224.0 L653.3 228.0 L653.5 232.0 L653.6 236.0 L653.8 240.0 L653.9 244.0 L654.0 248.0 L654.1 252.0 L654.1 256.0 L654.1 260.0 L654.1 264.0 L654.1 268.0 L654.0 272.0 L654.0 276.0 L653.9 280.0 L653.7 284.0 L653.6 288.0 L653.4 292.0 L653.2 296.0 L653.0 300.0 L652.8 304.0 L652.5 308.0 L652.2 312.0 L651.9 316.0 L651.6 320.0 L651.2 324.0 L650.9 328.0 L650.5 332.0 L650.0 336.0 L649.6 340.0 L649.1 344.0 L648.6 348.0 L648.1 352.0 L647.6 356.0 L647.0 360.0 L646.4 364.0 L645.8 368.0 L645.2 372.0 L644.6 376.0 L643.9 380.0 L643.2 384.0 L642.5 388.0 L641.8 392.0 L641.0 396.0 L640.2 400.0 L639.4 404.0 L638.6 408.0 L637.7 412.0 L636.9 416.0 L636.0 420.0 L635.0 424.0 L634.1 428.0 L633.1 432.0 L632.1 436.0 L631.1 440.0 L630.1 444.0 L629.0 448.0 L628.0 452.0 L626.9 456.0 L625.7 460.0 L624.6 464.0 L623.4 468.0 L622.2 472.0 L621.0 476.0 L619.7 480.0 L618.4 484.0 L617.1 488.0 L615.8 492.0 L614.5 496.0 L613.1 500.0 L611.7 504.0 L610.2 508.0 L608.8 512.0 L607.3 516.0 L605.8 520.0 L604.3 524.0 L602.7 528.0 L601.1 532.0 L599.5 536.0 L597.9 540.0 L596.2 544.0 L594.5 548.0 L592.8 552.0 L591.0 556.0 L589.2 560.0 L587.4 564.0 L585.6 568.0 L583.7 572.0 L581.8 576.0 L579.9 580.0 L577.9 584.0 L575.9 588.0 L573.9 592.0 L571.9 596.0 L569.8 600.0 L567.7 604.0 L565.5 608.0 L563.3 612.0 L561.7 615.0 L840.0 615.0 L840.0 0.0 Z" fill="#36255c"/>
    </g>
    <g filter="url(#b3)">
      <path d="M583.2 0.0 L585.3 4.0 L587.3 8.0 L589.3 12.0 L591.3 16.0 L593.2 20.0 L595.1 24.0 L596.9 28.0 L598.7 32.0 L600.5 36.0 L602.2 40.0 L603.9 44.0 L605.5 48.0 L607.1 52.0 L608.7 56.0 L610.2 60.0 L611.7 64.0 L613.1 68.0 L614.6 72.0 L615.9 76.0 L617.3 80.0 L618.6 84.0 L619.8 88.0 L621.1 92.0 L622.3 96.0 L623.4 100.0 L624.5 104.0 L625.6 108.0 L626.7 112.0 L627.7 116.0 L628.7 120.0 L629.7 124.0 L630.6 128.0 L631.5 132.0 L632.4 136.0 L633.2 140.0 L634.0 144.0 L634.8 148.0 L635.5 152.0 L636.3 156.0 L636.9 160.0 L637.6 164.0 L638.2 168.0 L638.8 172.0 L639.4 176.0 L639.9 180.0 L640.4 184.0 L640.9 188.0 L641.4 192.0 L641.8 196.0 L642.2 200.0 L642.6 204.0 L642.9 208.0 L643.3 212.0 L643.6 216.0 L643.8 220.0 L644.1 224.0 L644.3 228.0 L644.5 232.0 L644.6 236.0 L644.8 240.0 L644.9 244.0 L645.0 248.0 L645.1 252.0 L645.1 256.0 L645.1 260.0 L645.1 264.0 L645.1 268.0 L645.0 272.0 L645.0 276.0 L644.9 280.0 L644.7 284.0 L644.6 288.0 L644.4 292.0 L644.2 296.0 L644.0 300.0 L643.8 304.0 L643.5 308.0 L643.2 312.0 L642.9 316.0 L642.6 320.0 L642.2 324.0 L641.9 328.0 L641.5 332.0 L641.0 336.0 L640.6 340.0 L640.1 344.0 L639.6 348.0 L639.1 352.0 L638.6 356.0 L638.0 360.0 L637.4 364.0 L636.8 368.0 L636.2 372.0 L635.6 376.0 L634.9 380.0 L634.2 384.0 L633.5 388.0 L632.8 392.0 L632.0 396.0 L631.2 400.0 L630.4 404.0 L629.6 408.0 L628.7 412.0 L627.9 416.0 L627.0 420.0 L626.0 424.0 L625.1 428.0 L624.1 432.0 L623.1 436.0 L622.1 440.0 L621.1 444.0 L620.0 448.0 L619.0 452.0 L617.9 456.0 L616.7 460.0 L615.6 464.0 L614.4 468.0 L613.2 472.0 L612.0 476.0 L610.7 480.0 L609.4 484.0 L608.1 488.0 L606.8 492.0 L605.5 496.0 L604.1 500.0 L602.7 504.0 L601.2 508.0 L599.8 512.0 L598.3 516.0 L596.8 520.0 L595.3 524.0 L593.7 528.0 L592.1 532.0 L590.5 536.0 L588.9 540.0 L587.2 544.0 L585.5 548.0 L583.8 552.0 L582.0 556.0 L580.2 560.0 L578.4 564.0 L576.6 568.0 L574.7 572.0 L572.8 576.0 L570.9 580.0 L568.9 584.0 L566.9 588.0 L564.9 592.0 L562.9 596.0 L560.8 600.0 L558.7 604.0 L556.5 608.0 L554.3 612.0 L552.7 615.0 L561.7 615.0 L563.3 612.0 L565.5 608.0 L567.7 604.0 L569.8 600.0 L571.9 596.0 L573.9 592.0 L575.9 588.0 L577.9 584.0 L579.9 580.0 L581.8 576.0 L583.7 572.0 L585.6 568.0 L587.4 564.0 L589.2 560.0 L591.0 556.0 L592.8 552.0 L594.5 548.0 L596.2 544.0 L597.9 540.0 L599.5 536.0 L601.1 532.0 L602.7 528.0 L604.3 524.0 L605.8 520.0 L607.3 516.0 L608.8 512.0 L610.2 508.0 L611.7 504.0 L613.1 500.0 L614.5 496.0 L615.8 492.0 L617.1 488.0 L618.4 484.0 L619.7 480.0 L621.0 476.0 L622.2 472.0 L623.4 468.0 L624.6 464.0 L625.7 460.0 L626.9 456.0 L628.0 452.0 L629.0 448.0 L630.1 444.0 L631.1 440.0 L632.1 436.0 L633.1 432.0 L634.1 428.0 L635.0 424.0 L636.0 420.0 L636.9 416.0 L637.7 412.0 L638.6 408.0 L639.4 404.0 L640.2 400.0 L641.0 396.0 L641.8 392.0 L642.5 388.0 L643.2 384.0 L643.9 380.0 L644.6 376.0 L645.2 372.0 L645.8 368.0 L646.4 364.0 L647.0 360.0 L647.6 356.0 L648.1 352.0 L648.6 348.0 L649.1 344.0 L649.6 340.0 L650.0 336.0 L650.5 332.0 L650.9 328.0 L651.2 324.0 L651.6 320.0 L651.9 316.0 L652.2 312.0 L652.5 308.0 L652.8 304.0 L653.0 300.0 L653.2 296.0 L653.4 292.0 L653.6 288.0 L653.7 284.0 L653.9 280.0 L654.0 276.0 L654.0 272.0 L654.1 268.0 L654.1 264.0 L654.1 260.0 L654.1 256.0 L654.1 252.0 L654.0 248.0 L653.9 244.0 L653.8 240.0 L653.6 236.0 L653.5 232.0 L653.3 228.0 L653.1 224.0 L652.8 220.0 L652.6 216.0 L652.3 212.0 L651.9 208.0 L651.6 204.0 L651.2 200.0 L650.8 196.0 L650.4 192.0 L649.9 188.0 L649.4 184.0 L648.9 180.0 L648.4 176.0 L647.8 172.0 L647.2 168.0 L646.6 164.0 L645.9 160.0 L645.3 156.0 L644.5 152.0 L643.8 148.0 L643.0 144.0 L642.2 140.0 L641.4 136.0 L640.5 132.0 L639.6 128.0 L638.7 124.0 L637.7 120.0 L636.7 116.0 L635.7 112.0 L634.6 108.0 L633.5 104.0 L632.4 100.0 L631.3 96.0 L630.1 92.0 L628.8 88.0 L627.6 84.0 L626.3 80.0 L624.9 76.0 L623.6 72.0 L622.1 68.0 L620.7 64.0 L619.2 60.0 L617.7 56.0 L616.1 52.0 L614.5 48.0 L612.9 44.0 L611.2 40.0 L609.5 36.0 L607.7 32.0 L605.9 28.0 L604.1 24.0 L602.2 20.0 L600.3 16.0 L598.3 12.0 L596.3 8.0 L594.3 4.0 L592.2 0.0 Z" fill="#3a1f4c" opacity="0.8"/>
      <path d="M592.2 0.0 L594.3 4.0 L596.3 8.0 L598.3 12.0 L600.3 16.0 L602.2 20.0 L604.1 24.0 L605.9 28.0 L607.7 32.0 L609.5 36.0 L611.2 40.0 L612.9 44.0 L614.5 48.0 L616.1 52.0 L617.7 56.0 L619.2 60.0 L620.7 64.0 L622.1 68.0 L623.6 72.0 L624.9 76.0 L626.3 80.0 L627.6 84.0 L628.8 88.0 L630.1 92.0 L631.3 96.0 L632.4 100.0 L633.5 104.0 L634.6 108.0 L635.7 112.0 L636.7 116.0 L637.7 120.0 L638.7 124.0 L639.6 128.0 L640.5 132.0 L641.4 136.0 L642.2 140.0 L643.0 144.0 L643.8 148.0 L644.5 152.0 L645.3 156.0 L645.9 160.0 L646.6 164.0 L647.2 168.0 L647.8 172.0 L648.4 176.0 L648.9 180.0 L649.4 184.0 L649.9 188.0 L650.4 192.0 L650.8 196.0 L651.2 200.0 L651.6 204.0 L651.9 208.0 L652.3 212.0 L652.6 216.0 L652.8 220.0 L653.1 224.0 L653.3 228.0 L653.5 232.0 L653.6 236.0 L653.8 240.0 L653.9 244.0 L654.0 248.0 L654.1 252.0 L654.1 256.0 L654.1 260.0 L654.1 264.0 L654.1 268.0 L654.0 272.0 L654.0 276.0 L653.9 280.0 L653.7 284.0 L653.6 288.0 L653.4 292.0 L653.2 296.0 L653.0 300.0 L652.8 304.0 L652.5 308.0 L652.2 312.0 L651.9 316.0 L651.6 320.0 L651.2 324.0 L650.9 328.0 L650.5 332.0 L650.0 336.0 L649.6 340.0 L649.1 344.0 L648.6 348.0 L648.1 352.0 L647.6 356.0 L647.0 360.0 L646.4 364.0 L645.8 368.0 L645.2 372.0 L644.6 376.0 L643.9 380.0 L643.2 384.0 L642.5 388.0 L641.8 392.0 L641.0 396.0 L640.2 400.0 L639.4 404.0 L638.6 408.0 L637.7 412.0 L636.9 416.0 L636.0 420.0 L635.0 424.0 L634.1 428.0 L633.1 432.0 L632.1 436.0 L631.1 440.0 L630.1 444.0 L629.0 448.0 L628.0 452.0 L626.9 456.0 L625.7 460.0 L624.6 464.0 L623.4 468.0 L622.2 472.0 L621.0 476.0 L619.7 480.0 L618.4 484.0 L617.1 488.0 L615.8 492.0 L614.5 496.0 L613.1 500.0 L611.7 504.0 L610.2 508.0 L608.8 512.0 L607.3 516.0 L605.8 520.0 L604.3 524.0 L602.7 528.0 L601.1 532.0 L599.5 536.0 L597.9 540.0 L596.2 544.0 L594.5 548.0 L592.8 552.0 L591.0 556.0 L589.2 560.0 L587.4 564.0 L585.6 568.0 L583.7 572.0 L581.8 576.0 L579.9 580.0 L577.9 584.0 L575.9 588.0 L573.9 592.0 L571.9 596.0 L569.8 600.0 L567.7 604.0 L565.5 608.0 L563.3 612.0 L561.7 615.0 L571.7 615.0 L573.3 612.0 L575.5 608.0 L577.7 604.0 L579.8 600.0 L581.9 596.0 L583.9 592.0 L585.9 588.0 L587.9 584.0 L589.9 580.0 L591.8 576.0 L593.7 572.0 L595.6 568.0 L597.4 564.0 L599.2 560.0 L601.0 556.0 L602.8 552.0 L604.5 548.0 L606.2 544.0 L607.9 540.0 L609.5 536.0 L611.1 532.0 L612.7 528.0 L614.3 524.0 L615.8 520.0 L617.3 516.0 L618.8 512.0 L620.2 508.0 L621.7 504.0 L623.1 500.0 L624.5 496.0 L625.8 492.0 L627.1 488.0 L628.4 484.0 L629.7 480.0 L631.0 476.0 L632.2 472.0 L633.4 468.0 L634.6 464.0 L635.7 460.0 L636.9 456.0 L638.0 452.0 L639.0 448.0 L640.1 444.0 L641.1 440.0 L642.1 436.0 L643.1 432.0 L644.1 428.0 L645.0 424.0 L646.0 420.0 L646.9 416.0 L647.7 412.0 L648.6 408.0 L649.4 404.0 L650.2 400.0 L651.0 396.0 L651.8 392.0 L652.5 388.0 L653.2 384.0 L653.9 380.0 L654.6 376.0 L655.2 372.0 L655.8 368.0 L656.4 364.0 L657.0 360.0 L657.6 356.0 L658.1 352.0 L658.6 348.0 L659.1 344.0 L659.6 340.0 L660.0 336.0 L660.5 332.0 L660.9 328.0 L661.2 324.0 L661.6 320.0 L661.9 316.0 L662.2 312.0 L662.5 308.0 L662.8 304.0 L663.0 300.0 L663.2 296.0 L663.4 292.0 L663.6 288.0 L663.7 284.0 L663.9 280.0 L664.0 276.0 L664.0 272.0 L664.1 268.0 L664.1 264.0 L664.1 260.0 L664.1 256.0 L664.1 252.0 L664.0 248.0 L663.9 244.0 L663.8 240.0 L663.6 236.0 L663.5 232.0 L663.3 228.0 L663.1 224.0 L662.8 220.0 L662.6 216.0 L662.3 212.0 L661.9 208.0 L661.6 204.0 L661.2 200.0 L660.8 196.0 L660.4 192.0 L659.9 188.0 L659.4 184.0 L658.9 180.0 L658.4 176.0 L657.8 172.0 L657.2 168.0 L656.6 164.0 L655.9 160.0 L655.3 156.0 L654.5 152.0 L653.8 148.0 L653.0 144.0 L652.2 140.0 L651.4 136.0 L650.5 132.0 L649.6 128.0 L648.7 124.0 L647.7 120.0 L646.7 116.0 L645.7 112.0 L644.6 108.0 L643.5 104.0 L642.4 100.0 L641.3 96.0 L640.1 92.0 L638.8 88.0 L637.6 84.0 L636.3 80.0 L634.9 76.0 L633.6 72.0 L632.1 68.0 L630.7 64.0 L629.2 60.0 L627.7 56.0 L626.1 52.0 L624.5 48.0 L622.9 44.0 L621.2 40.0 L619.5 36.0 L617.7 32.0 L615.9 28.0 L614.1 24.0 L612.2 20.0 L610.3 16.0 L608.3 12.0 L606.3 8.0 L604.3 4.0 L602.2 0.0 Z" fill="#46297a" opacity="0.5"/>
    </g>
    <g filter="url(#b6)">
      <path d="M718.5 330.0 L718.2 334.0 L717.8 338.0 L717.1 342.0 L716.1 346.0 L715.0 350.0 L713.9 354.0 L712.7 358.0 L711.6 362.0 L710.4 366.0 L709.2 370.0 L708.0 374.0 L706.8 378.0 L705.5 382.0 L704.3 386.0 L703.0 390.0 L701.6 394.0 L700.3 398.0 L699.0 402.0 L697.6 406.0 L696.2 410.0 L694.8 414.0 L693.4 418.0 L691.9 422.0 L690.4 426.0 L688.9 430.0 L687.4 434.0 L685.9 438.0 L684.4 442.0 L682.8 446.0 L681.2 450.0 L679.6 454.0 L678.0 458.0 L676.3 462.0 L674.7 466.0 L673.0 470.0 L671.3 474.0 L669.6 478.0 L667.9 482.0 L666.1 486.0 L664.4 490.0 L662.6 494.0 L660.8 498.0 L659.0 502.0 L657.1 506.0 L655.3 510.0 L653.4 514.0 L651.6 518.0 L649.7 522.0 L647.8 526.0 L645.8 530.0 L643.9 534.0 L641.9 538.0 L640.0 542.0 L638.0 546.0 L636.0 550.0 L634.0 554.0 L631.9 558.0 L629.9 562.0 L627.8 566.0 L625.8 570.0 L623.7 574.0 L621.6 578.0 L619.5 582.0 L617.4 586.0 L615.2 590.0 L613.1 594.0 L610.9 598.0 L608.8 602.0 L606.6 606.0 L604.4 610.0 L602.2 614.0 L601.7 615.0 L650.4 615.0 L650.8 614.0 L652.3 610.0 L653.8 606.0 L655.3 602.0 L656.8 598.0 L658.3 594.0 L659.7 590.0 L661.2 586.0 L662.6 582.0 L664.1 578.0 L665.5 574.0 L666.9 570.0 L668.3 566.0 L669.6 562.0 L671.0 558.0 L672.3 554.0 L673.7 550.0 L675.0 546.0 L676.3 542.0 L677.6 538.0 L678.9 534.0 L680.1 530.0 L681.4 526.0 L682.6 522.0 L683.8 518.0 L685.0 514.0 L686.2 510.0 L687.4 506.0 L688.5 502.0 L689.7 498.0 L690.8 494.0 L691.9 490.0 L693.0 486.0 L694.0 482.0 L695.1 478.0 L696.1 474.0 L697.1 470.0 L698.1 466.0 L699.1 462.0 L700.0 458.0 L701.0 454.0 L701.9 450.0 L702.8 446.0 L703.7 442.0 L704.6 438.0 L705.4 434.0 L706.2 430.0 L707.1 426.0 L707.8 422.0 L708.6 418.0 L709.4 414.0 L710.1 410.0 L710.8 406.0 L711.5 402.0 L712.2 398.0 L712.8 394.0 L713.5 390.0 L714.1 386.0 L714.7 382.0 L715.2 378.0 L715.8 374.0 L716.3 370.0 L716.8 366.0 L717.3 362.0 L717.8 358.0 L718.2 354.0 L718.7 350.0 L719.1 346.0 L719.5 342.0 L719.8 338.0 L720.2 334.0 L720.5 330.0 Z" fill="#2e2150" opacity="0.85"/>
    </g>
    <g filter="url(#b2)">
      <path d="M616.0 0.0 L616.4 2.5 L616.7 5.1 L617.1 7.7 L617.4 10.3 L617.8 12.9 L618.1 15.4 L618.5 17.9 L618.9 20.4 L619.4 22.7 L620.0 25.0 L620.6 27.1 L621.3 29.2 L622.0 31.1 L622.7 33.0 L623.5 34.8 L624.3 36.6 L625.2 38.4 L626.1 40.2 L627.0 42.1 L628.0 44.0 L629.1 46.0 L630.2 47.9 L631.4 49.9 L632.7 51.9 L634.0 53.9 L635.3 56.0 L636.6 58.0 L637.8 60.0 L638.9 62.0 L640.0 64.0 L641.0 66.0 L641.9 68.0 L642.7 70.0 L643.5 72.0 L644.3 74.0 L645.1 76.0 L645.8 78.0 L646.5 80.0 L647.3 82.0 L648.0 84.0 L648.7 86.0 L649.4 88.0 L650.1 90.1 L650.8 92.1 L651.4 94.1 L652.1 96.1 L652.8 98.1 L653.5 100.1 L654.2 102.1 L655.0 104.0 L655.8 105.9 L656.7 107.9 L657.6 109.8 L658.5 111.8 L659.4 113.7 L660.4 115.5 L661.3 117.3 L662.2 119.0 L663.1 120.6 L664.0 122.0 L664.8 123.3 L665.7 124.4 L666.5 125.4 L667.3 126.2 L668.1 127.1 L668.8 127.8 L669.6 128.6 L670.4 129.3 L671.2 130.1 L672.0 131.0 L672.0 131.0 L672.5 130.1 L673.0 129.3 L673.5 128.6 L674.0 127.8 L674.6 127.1 L675.1 126.2 L675.6 125.4 L676.1 124.4 L676.5 123.3 L677.0 122.0 L677.4 120.6 L677.9 119.0 L678.3 117.3 L678.7 115.5 L679.1 113.7 L679.5 111.8 L679.9 109.8 L680.3 107.9 L680.6 105.9 L681.0 104.0 L681.3 102.1 L681.7 100.1 L682.0 98.1 L682.4 96.1 L682.7 94.1 L683.0 92.1 L683.3 90.1 L683.5 88.0 L683.8 86.0 L684.0 84.0 L684.2 82.0 L684.4 80.0 L684.5 78.0 L684.6 76.0 L684.8 74.0 L684.8 72.0 L684.9 70.0 L685.0 68.0 L685.0 66.0 L685.0 64.0 L685.0 62.0 L684.9 60.0 L684.8 58.0 L684.7 56.0 L684.6 53.9 L684.5 51.9 L684.4 49.9 L684.2 47.9 L684.1 46.0 L684.0 44.0 L683.9 42.1 L683.8 40.2 L683.7 38.4 L683.6 36.6 L683.4 34.8 L683.3 33.0 L683.2 31.1 L683.1 29.2 L683.1 27.1 L683.0 25.0 L683.0 22.7 L682.9 20.4 L682.9 17.9 L682.9 15.4 L682.9 12.9 L683.0 10.3 L683.0 7.7 L683.0 5.1 L683.0 2.5 L683.0 0.0 Z" fill="url(#gtongue)"/>
    </g>
    <g filter="url(#b2)">
<path d="M680.5 0.0 L681.6 4.0 L682.8 8.0 L683.9 12.0 L685.0 16.0 L686.1 20.0 L687.1 24.0 L688.2 28.0 L689.3 32.0 L690.3 36.0 L691.3 40.0 L692.4 44.0 L693.4 48.0 L694.4 52.0 L695.3 56.0 L696.3 60.0 L697.2 64.0 L698.2 68.0 L699.1 72.0 L700.0 76.0 L700.9 80.0 L701.8 84.0 L702.6 88.0 L703.5 92.0 L704.3 96.0 L705.1 100.0 L705.9 104.0 L706.7 108.0 L707.5 112.0 L708.2 116.0 L708.9 120.0 L709.7 124.0 L710.3 128.0 L711.0 132.0 L711.7 136.0 L712.3 140.0 L713.0 144.0 L713.6 148.0 L714.2 152.0 L714.7 156.0 L715.3 160.0 L715.8 164.0 L716.3 168.0 L716.8 172.0 L717.3 176.0 L717.8 180.0 L718.2 184.0 L718.6 188.0 L719.0 192.0 L719.4 196.0 L719.8 200.0 L720.1 204.0 L720.4 208.0 L720.7 212.0 L721.0 216.0 L721.3 220.0 L721.5 224.0 L721.8 228.0 L722.0 232.0 L722.2 236.0 L722.3 240.0 L722.5 244.0 L722.6 248.0 L722.7 252.0 L722.8 256.0 L722.8 260.0 L722.9 264.0 L722.9 268.0 L722.9 272.0 L722.9 276.0 L722.8 280.0 L722.7 284.0 L722.7 288.0 L722.6 292.0 L722.4 296.0 L722.3 300.0 L722.1 304.0 L721.9 308.0 L721.7 312.0 L721.5 316.0 L721.2 320.0 L721.0 324.0 L720.7 328.0 L720.3 332.0 L720.0 336.0 L719.7 340.0 L719.3 344.0 L718.9 348.0 L718.5 352.0 L718.0 356.0 L717.6 360.0 L717.1 364.0 L716.6 368.0 L716.1 372.0 L715.5 376.0 L715.0 380.0 L714.4 384.0 L713.8 388.0 L713.1 392.0 L712.5 396.0 L711.8 400.0 L711.2 404.0 L710.5 408.0 L709.7 412.0 L709.0 416.0 L708.2 420.0 L707.4 424.0 L706.6 428.0 L705.8 432.0 L705.0 436.0 L704.1 440.0 L703.3 444.0 L702.4 448.0 L701.4 452.0 L700.5 456.0 L699.6 460.0 L698.6 464.0 L697.6 468.0 L696.6 472.0 L695.6 476.0 L694.5 480.0 L693.5 484.0 L692.4 488.0 L691.3 492.0 L690.2 496.0 L689.1 500.0 L687.9 504.0 L686.8 508.0 L685.6 512.0 L684.4 516.0 L683.2 520.0 L682.0 524.0 L680.8 528.0 L679.5 532.0 L678.2 536.0 L676.9 540.0 L675.6 544.0 L674.3 548.0 L673.0 552.0 L671.7 556.0 L670.3 560.0 L668.9 564.0 L667.6 568.0 L666.2 572.0 L664.8 576.0 L663.3 580.0 L661.9 584.0 L660.5 588.0 L659.0 592.0 L657.5 596.0 L656.1 600.0 L654.6 604.0 L653.1 608.0 L651.6 612.0 L650.4 615.0 L840.0 615.0 L840.0 0.0 Z" fill="#c03048"/>
<path d="M684.5 0.0 L685.6 4.0 L686.8 8.0 L687.9 12.0 L689.0 16.0 L690.1 20.0 L691.1 24.0 L692.2 28.0 L693.3 32.0 L694.3 36.0 L695.3 40.0 L696.4 44.0 L697.4 48.0 L698.4 52.0 L699.3 56.0 L700.3 60.0 L701.2 64.0 L702.2 68.0 L703.1 72.0 L704.0 76.0 L704.9 80.0 L705.8 84.0 L706.6 88.0 L707.5 92.0 L708.3 96.0 L709.1 100.0 L709.9 104.0 L710.7 108.0 L711.5 112.0 L712.2 116.0 L712.9 120.0 L713.7 124.0 L714.3 128.0 L715.0 132.0 L715.7 136.0 L716.3 140.0 L717.0 144.0 L717.6 148.0 L718.2 152.0 L718.7 156.0 L719.3 160.0 L719.8 164.0 L720.3 168.0 L720.8 172.0 L721.3 176.0 L721.8 180.0 L722.2 184.0 L722.6 188.0 L723.0 192.0 L723.4 196.0 L723.8 200.0 L724.1 204.0 L724.4 208.0 L724.7 212.0 L725.0 216.0 L725.3 220.0 L725.5 224.0 L725.8 228.0 L726.0 232.0 L726.2 236.0 L726.3 240.0 L726.5 244.0 L726.6 248.0 L726.7 252.0 L726.8 256.0 L726.8 260.0 L726.9 264.0 L726.9 268.0 L726.9 272.0 L726.9 276.0 L726.8 280.0 L726.7 284.0 L726.7 288.0 L726.6 292.0 L726.4 296.0 L726.3 300.0 L726.1 304.0 L725.9 308.0 L725.7 312.0 L725.5 316.0 L725.2 320.0 L725.0 324.0 L724.7 328.0 L724.3 332.0 L724.0 336.0 L723.7 340.0 L723.3 344.0 L722.9 348.0 L722.5 352.0 L722.0 356.0 L721.6 360.0 L721.1 364.0 L720.6 368.0 L720.1 372.0 L719.5 376.0 L719.0 380.0 L718.4 384.0 L717.8 388.0 L717.1 392.0 L716.5 396.0 L715.8 400.0 L715.2 404.0 L714.5 408.0 L713.7 412.0 L713.0 416.0 L712.2 420.0 L711.4 424.0 L710.6 428.0 L709.8 432.0 L709.0 436.0 L708.1 440.0 L707.3 444.0 L706.4 448.0 L705.4 452.0 L704.5 456.0 L703.6 460.0 L702.6 464.0 L701.6 468.0 L700.6 472.0 L699.6 476.0 L698.5 480.0 L697.5 484.0 L696.4 488.0 L695.3 492.0 L694.2 496.0 L693.1 500.0 L691.9 504.0 L690.8 508.0 L689.6 512.0 L688.4 516.0 L687.2 520.0 L686.0 524.0 L684.8 528.0 L683.5 532.0 L682.2 536.0 L680.9 540.0 L679.6 544.0 L678.3 548.0 L677.0 552.0 L675.7 556.0 L674.3 560.0 L672.9 564.0 L671.6 568.0 L670.2 572.0 L668.8 576.0 L667.3 580.0 L665.9 584.0 L664.5 588.0 L663.0 592.0 L661.5 596.0 L660.1 600.0 L658.6 604.0 L657.1 608.0 L655.6 612.0 L654.4 615.0 L840.0 615.0 L840.0 0.0 Z" fill="#a02a46"/>
<path d="M689.5 0.0 L690.6 4.0 L691.8 8.0 L692.9 12.0 L694.0 16.0 L695.1 20.0 L696.1 24.0 L697.2 28.0 L698.3 32.0 L699.3 36.0 L700.3 40.0 L701.4 44.0 L702.4 48.0 L703.4 52.0 L704.3 56.0 L705.3 60.0 L706.2 64.0 L707.2 68.0 L708.1 72.0 L709.0 76.0 L709.9 80.0 L710.8 84.0 L711.6 88.0 L712.5 92.0 L713.3 96.0 L714.1 100.0 L714.9 104.0 L715.7 108.0 L716.5 112.0 L717.2 116.0 L717.9 120.0 L718.7 124.0 L719.3 128.0 L720.0 132.0 L720.7 136.0 L721.3 140.0 L722.0 144.0 L722.6 148.0 L723.2 152.0 L723.7 156.0 L724.3 160.0 L724.8 164.0 L725.3 168.0 L725.8 172.0 L726.3 176.0 L726.8 180.0 L727.2 184.0 L727.6 188.0 L728.0 192.0 L728.4 196.0 L728.8 200.0 L729.1 204.0 L729.4 208.0 L729.7 212.0 L730.0 216.0 L730.3 220.0 L730.5 224.0 L730.8 228.0 L731.0 232.0 L731.2 236.0 L731.3 240.0 L731.5 244.0 L731.6 248.0 L731.7 252.0 L731.8 256.0 L731.8 260.0 L731.9 264.0 L731.9 268.0 L731.9 272.0 L731.9 276.0 L731.8 280.0 L731.7 284.0 L731.7 288.0 L731.6 292.0 L731.4 296.0 L731.3 300.0 L731.1 304.0 L730.9 308.0 L730.7 312.0 L730.5 316.0 L730.2 320.0 L730.0 324.0 L729.7 328.0 L729.3 332.0 L729.0 336.0 L728.7 340.0 L728.3 344.0 L727.9 348.0 L727.5 352.0 L727.0 356.0 L726.6 360.0 L726.1 364.0 L725.6 368.0 L725.1 372.0 L724.5 376.0 L724.0 380.0 L723.4 384.0 L722.8 388.0 L722.1 392.0 L721.5 396.0 L720.8 400.0 L720.2 404.0 L719.5 408.0 L718.7 412.0 L718.0 416.0 L717.2 420.0 L716.4 424.0 L715.6 428.0 L714.8 432.0 L714.0 436.0 L713.1 440.0 L712.3 444.0 L711.4 448.0 L710.4 452.0 L709.5 456.0 L708.6 460.0 L707.6 464.0 L706.6 468.0 L705.6 472.0 L704.6 476.0 L703.5 480.0 L702.5 484.0 L701.4 488.0 L700.3 492.0 L699.2 496.0 L698.1 500.0 L696.9 504.0 L695.8 508.0 L694.6 512.0 L693.4 516.0 L692.2 520.0 L691.0 524.0 L689.8 528.0 L688.5 532.0 L687.2 536.0 L685.9 540.0 L684.6 544.0 L683.3 548.0 L682.0 552.0 L680.7 556.0 L679.3 560.0 L677.9 564.0 L676.6 568.0 L675.2 572.0 L673.8 576.0 L672.3 580.0 L670.9 584.0 L669.5 588.0 L668.0 592.0 L666.5 596.0 L665.1 600.0 L663.6 604.0 L662.1 608.0 L660.6 612.0 L659.4 615.0 L840.0 615.0 L840.0 0.0 Z" fill="#8a2442"/>
<path d="M698.5 0.0 L699.6 4.0 L700.8 8.0 L701.9 12.0 L703.0 16.0 L704.1 20.0 L705.1 24.0 L706.2 28.0 L707.3 32.0 L708.3 36.0 L709.3 40.0 L710.4 44.0 L711.4 48.0 L712.4 52.0 L713.3 56.0 L714.3 60.0 L715.2 64.0 L716.2 68.0 L717.1 72.0 L718.0 76.0 L718.9 80.0 L719.8 84.0 L720.6 88.0 L721.5 92.0 L722.3 96.0 L723.1 100.0 L723.9 104.0 L724.7 108.0 L725.5 112.0 L726.2 116.0 L726.9 120.0 L727.7 124.0 L728.3 128.0 L729.0 132.0 L729.7 136.0 L730.3 140.0 L731.0 144.0 L731.6 148.0 L732.2 152.0 L732.7 156.0 L733.3 160.0 L733.8 164.0 L734.3 168.0 L734.8 172.0 L735.3 176.0 L735.8 180.0 L736.2 184.0 L736.6 188.0 L737.0 192.0 L737.4 196.0 L737.8 200.0 L738.1 204.0 L738.4 208.0 L738.7 212.0 L739.0 216.0 L739.3 220.0 L739.5 224.0 L739.8 228.0 L740.0 232.0 L740.2 236.0 L740.3 240.0 L740.5 244.0 L740.6 248.0 L740.7 252.0 L740.8 256.0 L740.8 260.0 L740.9 264.0 L740.9 268.0 L740.9 272.0 L740.9 276.0 L740.8 280.0 L740.7 284.0 L740.7 288.0 L740.6 292.0 L740.4 296.0 L740.3 300.0 L740.1 304.0 L739.9 308.0 L739.7 312.0 L739.5 316.0 L739.2 320.0 L739.0 324.0 L738.7 328.0 L738.3 332.0 L738.0 336.0 L737.7 340.0 L737.3 344.0 L736.9 348.0 L736.5 352.0 L736.0 356.0 L735.6 360.0 L735.1 364.0 L734.6 368.0 L734.1 372.0 L733.5 376.0 L733.0 380.0 L732.4 384.0 L731.8 388.0 L731.1 392.0 L730.5 396.0 L729.8 400.0 L729.2 404.0 L728.5 408.0 L727.7 412.0 L727.0 416.0 L726.2 420.0 L725.4 424.0 L724.6 428.0 L723.8 432.0 L723.0 436.0 L722.1 440.0 L721.3 444.0 L720.4 448.0 L719.4 452.0 L718.5 456.0 L717.6 460.0 L716.6 464.0 L715.6 468.0 L714.6 472.0 L713.6 476.0 L712.5 480.0 L711.5 484.0 L710.4 488.0 L709.3 492.0 L708.2 496.0 L707.1 500.0 L705.9 504.0 L704.8 508.0 L703.6 512.0 L702.4 516.0 L701.2 520.0 L700.0 524.0 L698.8 528.0 L697.5 532.0 L696.2 536.0 L694.9 540.0 L693.6 544.0 L692.3 548.0 L691.0 552.0 L689.7 556.0 L688.3 560.0 L686.9 564.0 L685.6 568.0 L684.2 572.0 L682.8 576.0 L681.3 580.0 L679.9 584.0 L678.5 588.0 L677.0 592.0 L675.5 596.0 L674.1 600.0 L672.6 604.0 L671.1 608.0 L669.6 612.0 L668.4 615.0 L840.0 615.0 L840.0 0.0 Z" fill="#802244"/>
<path d="M710.5 0.0 L711.6 4.0 L712.8 8.0 L713.9 12.0 L715.0 16.0 L716.1 20.0 L717.1 24.0 L718.2 28.0 L719.3 32.0 L720.3 36.0 L721.3 40.0 L722.4 44.0 L723.4 48.0 L724.4 52.0 L725.3 56.0 L726.3 60.0 L727.2 64.0 L728.2 68.0 L729.1 72.0 L730.0 76.0 L730.9 80.0 L731.8 84.0 L732.6 88.0 L733.5 92.0 L734.3 96.0 L735.1 100.0 L735.9 104.0 L736.7 108.0 L737.5 112.0 L738.2 116.0 L738.9 120.0 L739.7 124.0 L740.3 128.0 L741.0 132.0 L741.7 136.0 L742.3 140.0 L743.0 144.0 L743.6 148.0 L744.2 152.0 L744.7 156.0 L745.3 160.0 L745.8 164.0 L746.3 168.0 L746.8 172.0 L747.3 176.0 L747.8 180.0 L748.2 184.0 L748.6 188.0 L749.0 192.0 L749.4 196.0 L749.8 200.0 L750.1 204.0 L750.4 208.0 L750.7 212.0 L751.0 216.0 L751.3 220.0 L751.5 224.0 L751.8 228.0 L752.0 232.0 L752.2 236.0 L752.3 240.0 L752.5 244.0 L752.6 248.0 L752.7 252.0 L752.8 256.0 L752.8 260.0 L752.9 264.0 L752.9 268.0 L752.9 272.0 L752.9 276.0 L752.8 280.0 L752.7 284.0 L752.7 288.0 L752.6 292.0 L752.4 296.0 L752.3 300.0 L752.1 304.0 L751.9 308.0 L751.7 312.0 L751.5 316.0 L751.2 320.0 L751.0 324.0 L750.7 328.0 L750.3 332.0 L750.0 336.0 L749.7 340.0 L749.3 344.0 L748.9 348.0 L748.5 352.0 L748.0 356.0 L747.6 360.0 L747.1 364.0 L746.6 368.0 L746.1 372.0 L745.5 376.0 L745.0 380.0 L744.4 384.0 L743.8 388.0 L743.1 392.0 L742.5 396.0 L741.8 400.0 L741.2 404.0 L740.5 408.0 L739.7 412.0 L739.0 416.0 L738.2 420.0 L737.4 424.0 L736.6 428.0 L735.8 432.0 L735.0 436.0 L734.1 440.0 L733.3 444.0 L732.4 448.0 L731.4 452.0 L730.5 456.0 L729.6 460.0 L728.6 464.0 L727.6 468.0 L726.6 472.0 L725.6 476.0 L724.5 480.0 L723.5 484.0 L722.4 488.0 L721.3 492.0 L720.2 496.0 L719.1 500.0 L717.9 504.0 L716.8 508.0 L715.6 512.0 L714.4 516.0 L713.2 520.0 L712.0 524.0 L710.8 528.0 L709.5 532.0 L708.2 536.0 L706.9 540.0 L705.6 544.0 L704.3 548.0 L703.0 552.0 L701.7 556.0 L700.3 560.0 L698.9 564.0 L697.6 568.0 L696.2 572.0 L694.8 576.0 L693.3 580.0 L691.9 584.0 L690.5 588.0 L689.0 592.0 L687.5 596.0 L686.1 600.0 L684.6 604.0 L683.1 608.0 L681.6 612.0 L680.4 615.0 L840.0 615.0 L840.0 0.0 Z" fill="#722249"/>
<path d="M725.5 0.0 L726.6 4.0 L727.8 8.0 L728.9 12.0 L730.0 16.0 L731.1 20.0 L732.1 24.0 L733.2 28.0 L734.3 32.0 L735.3 36.0 L736.3 40.0 L737.4 44.0 L738.4 48.0 L739.4 52.0 L740.3 56.0 L741.3 60.0 L742.2 64.0 L743.2 68.0 L744.1 72.0 L745.0 76.0 L745.9 80.0 L746.8 84.0 L747.6 88.0 L748.5 92.0 L749.3 96.0 L750.1 100.0 L750.9 104.0 L751.7 108.0 L752.5 112.0 L753.2 116.0 L753.9 120.0 L754.7 124.0 L755.3 128.0 L756.0 132.0 L756.7 136.0 L757.3 140.0 L758.0 144.0 L758.6 148.0 L759.2 152.0 L759.7 156.0 L760.3 160.0 L760.8 164.0 L761.3 168.0 L761.8 172.0 L762.3 176.0 L762.8 180.0 L763.2 184.0 L763.6 188.0 L764.0 192.0 L764.4 196.0 L764.8 200.0 L765.1 204.0 L765.4 208.0 L765.7 212.0 L766.0 216.0 L766.3 220.0 L766.5 224.0 L766.8 228.0 L767.0 232.0 L767.2 236.0 L767.3 240.0 L767.5 244.0 L767.6 248.0 L767.7 252.0 L767.8 256.0 L767.8 260.0 L767.9 264.0 L767.9 268.0 L767.9 272.0 L767.9 276.0 L767.8 280.0 L767.7 284.0 L767.7 288.0 L767.6 292.0 L767.4 296.0 L767.3 300.0 L767.1 304.0 L766.9 308.0 L766.7 312.0 L766.5 316.0 L766.2 320.0 L766.0 324.0 L765.7 328.0 L765.3 332.0 L765.0 336.0 L764.7 340.0 L764.3 344.0 L763.9 348.0 L763.5 352.0 L763.0 356.0 L762.6 360.0 L762.1 364.0 L761.6 368.0 L761.1 372.0 L760.5 376.0 L760.0 380.0 L759.4 384.0 L758.8 388.0 L758.1 392.0 L757.5 396.0 L756.8 400.0 L756.2 404.0 L755.5 408.0 L754.7 412.0 L754.0 416.0 L753.2 420.0 L752.4 424.0 L751.6 428.0 L750.8 432.0 L750.0 436.0 L749.1 440.0 L748.3 444.0 L747.4 448.0 L746.4 452.0 L745.5 456.0 L744.6 460.0 L743.6 464.0 L742.6 468.0 L741.6 472.0 L740.6 476.0 L739.5 480.0 L738.5 484.0 L737.4 488.0 L736.3 492.0 L735.2 496.0 L734.1 500.0 L732.9 504.0 L731.8 508.0 L730.6 512.0 L729.4 516.0 L728.2 520.0 L727.0 524.0 L725.8 528.0 L724.5 532.0 L723.2 536.0 L721.9 540.0 L720.6 544.0 L719.3 548.0 L718.0 552.0 L716.7 556.0 L715.3 560.0 L713.9 564.0 L712.6 568.0 L711.2 572.0 L709.8 576.0 L708.3 580.0 L706.9 584.0 L705.5 588.0 L704.0 592.0 L702.5 596.0 L701.1 600.0 L699.6 604.0 L698.1 608.0 L696.6 612.0 L695.4 615.0 L840.0 615.0 L840.0 0.0 Z" fill="#642252"/>
<path d="M742.5 0.0 L743.6 4.0 L744.8 8.0 L745.9 12.0 L747.0 16.0 L748.1 20.0 L749.1 24.0 L750.2 28.0 L751.3 32.0 L752.3 36.0 L753.3 40.0 L754.4 44.0 L755.4 48.0 L756.4 52.0 L757.3 56.0 L758.3 60.0 L759.2 64.0 L760.2 68.0 L761.1 72.0 L762.0 76.0 L762.9 80.0 L763.8 84.0 L764.6 88.0 L765.5 92.0 L766.3 96.0 L767.1 100.0 L767.9 104.0 L768.7 108.0 L769.5 112.0 L770.2 116.0 L770.9 120.0 L771.7 124.0 L772.3 128.0 L773.0 132.0 L773.7 136.0 L774.3 140.0 L775.0 144.0 L775.6 148.0 L776.2 152.0 L776.7 156.0 L777.3 160.0 L777.8 164.0 L778.3 168.0 L778.8 172.0 L779.3 176.0 L779.8 180.0 L780.2 184.0 L780.6 188.0 L781.0 192.0 L781.4 196.0 L781.8 200.0 L782.1 204.0 L782.4 208.0 L782.7 212.0 L783.0 216.0 L783.3 220.0 L783.5 224.0 L783.8 228.0 L784.0 232.0 L784.2 236.0 L784.3 240.0 L784.5 244.0 L784.6 248.0 L784.7 252.0 L784.8 256.0 L784.8 260.0 L784.9 264.0 L784.9 268.0 L784.9 272.0 L784.9 276.0 L784.8 280.0 L784.7 284.0 L784.7 288.0 L784.6 292.0 L784.4 296.0 L784.3 300.0 L784.1 304.0 L783.9 308.0 L783.7 312.0 L783.5 316.0 L783.2 320.0 L783.0 324.0 L782.7 328.0 L782.3 332.0 L782.0 336.0 L781.7 340.0 L781.3 344.0 L780.9 348.0 L780.5 352.0 L780.0 356.0 L779.6 360.0 L779.1 364.0 L778.6 368.0 L778.1 372.0 L777.5 376.0 L777.0 380.0 L776.4 384.0 L775.8 388.0 L775.1 392.0 L774.5 396.0 L773.8 400.0 L773.2 404.0 L772.5 408.0 L771.7 412.0 L771.0 416.0 L770.2 420.0 L769.4 424.0 L768.6 428.0 L767.8 432.0 L767.0 436.0 L766.1 440.0 L765.3 444.0 L764.4 448.0 L763.4 452.0 L762.5 456.0 L761.6 460.0 L760.6 464.0 L759.6 468.0 L758.6 472.0 L757.6 476.0 L756.5 480.0 L755.5 484.0 L754.4 488.0 L753.3 492.0 L752.2 496.0 L751.1 500.0 L749.9 504.0 L748.8 508.0 L747.6 512.0 L746.4 516.0 L745.2 520.0 L744.0 524.0 L742.8 528.0 L741.5 532.0 L740.2 536.0 L738.9 540.0 L737.6 544.0 L736.3 548.0 L735.0 552.0 L733.7 556.0 L732.3 560.0 L730.9 564.0 L729.6 568.0 L728.2 572.0 L726.8 576.0 L725.3 580.0 L723.9 584.0 L722.5 588.0 L721.0 592.0 L719.5 596.0 L718.1 600.0 L716.6 604.0 L715.1 608.0 L713.6 612.0 L712.4 615.0 L840.0 615.0 L840.0 0.0 Z" fill="#58205a"/>
<path d="M760.5 0.0 L761.6 4.0 L762.8 8.0 L763.9 12.0 L765.0 16.0 L766.1 20.0 L767.1 24.0 L768.2 28.0 L769.3 32.0 L770.3 36.0 L771.3 40.0 L772.4 44.0 L773.4 48.0 L774.4 52.0 L775.3 56.0 L776.3 60.0 L777.2 64.0 L778.2 68.0 L779.1 72.0 L780.0 76.0 L780.9 80.0 L781.8 84.0 L782.6 88.0 L783.5 92.0 L784.3 96.0 L785.1 100.0 L785.9 104.0 L786.7 108.0 L787.5 112.0 L788.2 116.0 L788.9 120.0 L789.7 124.0 L790.3 128.0 L791.0 132.0 L791.7 136.0 L792.3 140.0 L793.0 144.0 L793.6 148.0 L794.2 152.0 L794.7 156.0 L795.3 160.0 L795.8 164.0 L796.3 168.0 L796.8 172.0 L797.3 176.0 L797.8 180.0 L798.2 184.0 L798.6 188.0 L799.0 192.0 L799.4 196.0 L799.8 200.0 L800.1 204.0 L800.4 208.0 L800.7 212.0 L801.0 216.0 L801.3 220.0 L801.5 224.0 L801.8 228.0 L802.0 232.0 L802.2 236.0 L802.3 240.0 L802.5 244.0 L802.6 248.0 L802.7 252.0 L802.8 256.0 L802.8 260.0 L802.9 264.0 L802.9 268.0 L802.9 272.0 L802.9 276.0 L802.8 280.0 L802.7 284.0 L802.7 288.0 L802.6 292.0 L802.4 296.0 L802.3 300.0 L802.1 304.0 L801.9 308.0 L801.7 312.0 L801.5 316.0 L801.2 320.0 L801.0 324.0 L800.7 328.0 L800.3 332.0 L800.0 336.0 L799.7 340.0 L799.3 344.0 L798.9 348.0 L798.5 352.0 L798.0 356.0 L797.6 360.0 L797.1 364.0 L796.6 368.0 L796.1 372.0 L795.5 376.0 L795.0 380.0 L794.4 384.0 L793.8 388.0 L793.1 392.0 L792.5 396.0 L791.8 400.0 L791.2 404.0 L790.5 408.0 L789.7 412.0 L789.0 416.0 L788.2 420.0 L787.4 424.0 L786.6 428.0 L785.8 432.0 L785.0 436.0 L784.1 440.0 L783.3 444.0 L782.4 448.0 L781.4 452.0 L780.5 456.0 L779.6 460.0 L778.6 464.0 L777.6 468.0 L776.6 472.0 L775.6 476.0 L774.5 480.0 L773.5 484.0 L772.4 488.0 L771.3 492.0 L770.2 496.0 L769.1 500.0 L767.9 504.0 L766.8 508.0 L765.6 512.0 L764.4 516.0 L763.2 520.0 L762.0 524.0 L760.8 528.0 L759.5 532.0 L758.2 536.0 L756.9 540.0 L755.6 544.0 L754.3 548.0 L753.0 552.0 L751.7 556.0 L750.3 560.0 L748.9 564.0 L747.6 568.0 L746.2 572.0 L744.8 576.0 L743.3 580.0 L741.9 584.0 L740.5 588.0 L739.0 592.0 L737.5 596.0 L736.1 600.0 L734.6 604.0 L733.1 608.0 L731.6 612.0 L730.4 615.0 L840.0 615.0 L840.0 0.0 Z" fill="#4e205e"/>
    </g>
    <g filter="url(#b2)">
      <path d="M722.3 300.0 L722.1 304.0 L721.9 308.0 L721.7 312.0 L721.5 316.0 L721.2 320.0 L721.0 324.0 L720.7 328.0 L720.3 332.0 L720.0 336.0 L719.7 340.0 L719.3 344.0 L718.9 348.0 L718.5 352.0 L718.0 356.0 L717.6 360.0 L717.1 364.0 L716.6 368.0 L716.1 372.0 L715.5 376.0 L715.0 380.0 L714.4 384.0 L713.8 388.0 L713.1 392.0 L712.5 396.0 L711.8 400.0 L711.2 404.0 L710.5 408.0 L709.7 412.0 L709.0 416.0 L708.2 420.0 L707.4 424.0 L706.6 428.0 L705.8 432.0 L705.0 436.0 L704.1 440.0 L703.3 444.0 L702.4 448.0 L701.4 452.0 L700.5 456.0 L699.6 460.0 L698.6 464.0 L697.6 468.0 L696.6 472.0 L695.6 476.0 L694.5 480.0 L693.5 484.0 L692.4 488.0 L691.3 492.0 L690.2 496.0 L689.1 500.0 L687.9 504.0 L686.8 508.0 L685.6 512.0 L684.4 516.0 L683.2 520.0 L682.0 524.0 L680.8 528.0 L679.5 532.0 L678.2 536.0 L676.9 540.0 L675.6 544.0 L674.3 548.0 L673.0 552.0 L671.7 556.0 L670.3 560.0 L668.9 564.0 L667.6 568.0 L666.2 572.0 L664.8 576.0 L663.3 580.0 L661.9 584.0 L660.5 588.0 L659.0 592.0 L657.5 596.0 L656.1 600.0 L654.6 604.0 L653.1 608.0 L651.6 612.0 L650.4 615.0 L671.5 615.0 L672.5 612.0 L673.8 608.0 L675.0 604.0 L676.3 600.0 L677.5 596.0 L678.7 592.0 L679.9 588.0 L681.2 584.0 L682.3 580.0 L683.5 576.0 L684.7 572.0 L685.8 568.0 L687.0 564.0 L688.1 560.0 L689.2 556.0 L690.3 552.0 L691.4 548.0 L692.5 544.0 L693.5 540.0 L694.6 536.0 L695.6 532.0 L696.6 528.0 L697.6 524.0 L698.6 520.0 L699.6 516.0 L700.5 512.0 L701.5 508.0 L702.4 504.0 L703.3 500.0 L704.2 496.0 L705.0 492.0 L705.9 488.0 L706.7 484.0 L707.5 480.0 L708.3 476.0 L709.1 472.0 L709.9 468.0 L710.6 464.0 L711.4 460.0 L712.1 456.0 L712.8 452.0 L713.4 448.0 L714.1 444.0 L714.7 440.0 L715.4 436.0 L715.9 432.0 L716.5 428.0 L717.1 424.0 L717.6 420.0 L718.2 416.0 L718.7 412.0 L719.1 408.0 L719.6 404.0 L720.0 400.0 L720.5 396.0 L720.9 392.0 L721.2 388.0 L721.6 384.0 L722.0 380.0 L722.3 376.0 L722.6 372.0 L722.9 368.0 L723.1 364.0 L723.4 360.0 L723.6 356.0 L723.8 352.0 L724.0 348.0 L724.1 344.0 L724.3 340.0 L724.4 336.0 L724.5 332.0 L724.7 328.0 L725.0 324.0 L725.2 320.0 L725.5 316.0 L725.7 312.0 L725.9 308.0 L726.1 304.0 L726.3 300.0 Z" fill="#c23646" opacity="0.8"/>
    </g>
    <g filter="url(#b3)">
      <path d="M715.4 0.0 L716.3 4.0 L717.2 8.0 L718.1 12.0 L719.0 16.0 L719.8 20.0 L720.7 24.0 L721.6 28.0 L722.5 32.0 L723.3 36.0 L724.2 40.0 L725.1 44.0 L725.9 48.0 L726.8 52.0 L727.6 56.0 L728.4 60.0 L729.3 64.0 L730.1 68.0 L730.9 72.0 L731.7 76.0 L732.6 80.0 L733.4 84.0 L734.2 88.0 L735.0 92.0 L735.8 96.0 L736.5 100.0 L737.3 104.0 L738.1 108.0 L738.9 112.0 L739.6 116.0 L740.4 120.0 L741.2 124.0 L741.9 128.0 L742.7 132.0 L743.4 136.0 L744.1 140.0 L744.9 144.0 L745.6 148.0 L746.3 152.0 L747.1 156.0 L747.8 160.0 L748.5 164.0 L749.2 168.0 L749.9 172.0 L750.6 176.0 L751.3 180.0 L751.9 184.0 L752.6 188.0 L753.3 192.0 L754.0 196.0 L754.6 200.0 L755.3 204.0 L756.0 208.0 L756.6 212.0 L757.2 216.0 L757.9 220.0 L758.5 224.0 L759.2 228.0 L759.8 232.0 L760.4 236.0 L761.0 240.0 L761.6 244.0 L762.2 248.0 L762.8 252.0 L763.4 256.0 L764.0 260.0 L764.6 264.0 L765.2 268.0 L765.8 272.0 L766.3 276.0 L766.9 280.0 L767.5 284.0 L768.0 288.0 L768.6 292.0 L769.1 296.0 L769.7 300.0 L770.2 304.0 L770.7 308.0 L771.3 312.0 L771.8 316.0 L772.3 320.0 L772.8 324.0 L773.3 328.0 L773.8 332.0 L774.3 336.0 L774.8 340.0 L775.3 344.0 L775.8 348.0 L776.3 352.0 L776.7 356.0 L777.2 360.0 L777.7 364.0 L778.1 368.0 L778.6 372.0 L779.0 376.0 L779.5 380.0 L779.9 384.0 L780.3 388.0 L780.8 392.0 L781.2 396.0 L781.6 400.0 L782.0 404.0 L782.4 408.0 L782.8 412.0 L783.2 416.0 L783.6 420.0 L840.0 420.0 L840.0 0.0 Z" fill="#5a2470" opacity="0.75"/>
      <path d="M737.4 0.0 L738.3 4.0 L739.2 8.0 L740.1 12.0 L741.0 16.0 L741.8 20.0 L742.7 24.0 L743.6 28.0 L744.5 32.0 L745.3 36.0 L746.2 40.0 L747.1 44.0 L747.9 48.0 L748.8 52.0 L749.6 56.0 L750.4 60.0 L751.3 64.0 L752.1 68.0 L752.9 72.0 L753.7 76.0 L754.6 80.0 L755.4 84.0 L756.2 88.0 L757.0 92.0 L757.8 96.0 L758.5 100.0 L759.3 104.0 L760.1 108.0 L760.9 112.0 L761.6 116.0 L762.4 120.0 L763.2 124.0 L763.9 128.0 L764.7 132.0 L765.4 136.0 L766.1 140.0 L766.9 144.0 L767.6 148.0 L768.3 152.0 L769.1 156.0 L769.8 160.0 L770.5 164.0 L771.2 168.0 L771.9 172.0 L772.6 176.0 L773.3 180.0 L773.9 184.0 L774.6 188.0 L775.3 192.0 L776.0 196.0 L776.6 200.0 L777.3 204.0 L778.0 208.0 L778.6 212.0 L779.2 216.0 L779.9 220.0 L780.5 224.0 L781.2 228.0 L781.8 232.0 L782.4 236.0 L783.0 240.0 L783.6 244.0 L784.2 248.0 L784.8 252.0 L785.4 256.0 L786.0 260.0 L786.6 264.0 L787.2 268.0 L787.8 272.0 L788.3 276.0 L788.9 280.0 L789.5 284.0 L790.0 288.0 L790.6 292.0 L791.1 296.0 L791.7 300.0 L792.2 304.0 L792.7 308.0 L793.3 312.0 L793.8 316.0 L794.3 320.0 L794.8 324.0 L795.3 328.0 L795.8 332.0 L796.3 336.0 L796.8 340.0 L797.3 344.0 L797.8 348.0 L798.3 352.0 L798.7 356.0 L799.2 360.0 L799.7 364.0 L800.1 368.0 L800.6 372.0 L801.0 376.0 L801.5 380.0 L801.9 384.0 L802.3 388.0 L802.8 392.0 L803.2 396.0 L803.6 400.0 L840.0 400.0 L840.0 0.0 Z" fill="#2e1e50"/>
    </g>
    <g filter="url(#b1)">
<path d="M769.8 0.0 L770.5 4.0 L771.3 8.0 L772.0 12.0 L772.9 16.0 L773.7 20.0 L774.6 24.0 L775.5 28.0 L776.5 32.0 L777.4 36.0 L778.5 40.0 L779.5 44.0 L780.6 48.0 L781.8 52.0 L782.9 56.0 L784.1 60.0 L785.4 64.0 L786.6 68.0 L788.0 72.0 L789.3 76.0 L790.7 80.0 L792.1 84.0 L793.6 88.0 L795.1 92.0 L796.6 96.0 L798.2 100.0 L799.8 104.0 L801.4 108.0 L803.1 112.0 L804.8 116.0 L806.5 120.0 L808.3 124.0 L808.7 125.0 L840.0 125.0 L840.0 0.0 Z" fill="#eca048"/>
<path d="M776.8 0.0 L777.5 4.0 L778.3 8.0 L779.0 12.0 L779.9 16.0 L780.7 20.0 L781.6 24.0 L782.5 28.0 L783.5 32.0 L784.4 36.0 L785.5 40.0 L786.5 44.0 L787.6 48.0 L788.8 52.0 L789.9 56.0 L791.1 60.0 L792.4 64.0 L793.6 68.0 L795.0 72.0 L796.3 76.0 L797.7 80.0 L799.1 84.0 L800.6 88.0 L802.1 92.0 L803.6 96.0 L805.2 100.0 L806.8 104.0 L808.4 108.0 L810.1 112.0 L811.8 116.0 L813.5 120.0 L815.3 124.0 L815.7 125.0 L840.0 125.0 L840.0 0.0 Z" fill="#e07040"/>
<path d="M781.8 0.0 L782.5 4.0 L783.3 8.0 L784.0 12.0 L784.9 16.0 L785.7 20.0 L786.6 24.0 L787.5 28.0 L788.5 32.0 L789.4 36.0 L790.5 40.0 L791.5 44.0 L792.6 48.0 L793.8 52.0 L794.9 56.0 L796.1 60.0 L797.4 64.0 L798.6 68.0 L800.0 72.0 L801.3 76.0 L802.7 80.0 L804.1 84.0 L805.6 88.0 L807.1 92.0 L808.6 96.0 L810.2 100.0 L811.8 104.0 L813.4 108.0 L815.1 112.0 L816.8 116.0 L818.5 120.0 L820.3 124.0 L820.7 125.0 L840.0 125.0 L840.0 0.0 Z" fill="#d04050"/>
<path d="M789.8 0.0 L790.5 4.0 L791.3 8.0 L792.0 12.0 L792.9 16.0 L793.7 20.0 L794.6 24.0 L795.5 28.0 L796.5 32.0 L797.4 36.0 L798.5 40.0 L799.5 44.0 L800.6 48.0 L801.8 52.0 L802.9 56.0 L804.1 60.0 L805.4 64.0 L806.6 68.0 L808.0 72.0 L809.3 76.0 L810.7 80.0 L812.1 84.0 L813.6 88.0 L815.1 92.0 L816.6 96.0 L818.2 100.0 L819.8 104.0 L821.4 108.0 L823.1 112.0 L824.8 116.0 L826.5 120.0 L828.3 124.0 L828.7 125.0 L840.0 125.0 L840.0 0.0 Z" fill="#c83858"/>
    </g>
    <g fill="none" stroke-linecap="round">
      <path d="M592.2 0.0 L593.7 3.0 L595.3 6.0 L596.8 9.0 L598.3 12.0 L599.8 15.0 L601.3 18.0 L602.7 21.0 L604.1 24.0 L605.5 27.0 L606.8 30.0 L608.2 33.0 L609.5 36.0 L610.8 39.0 L612.1 42.0 L613.3 45.0 L614.5 48.0 L615.7 51.0 L616.9 54.0 L618.1 57.0 L619.2 60.0 L620.3 63.0 L621.4 66.0 L622.5 69.0 L623.6 72.0 L624.6 75.0 L625.6 78.0 L626.6 81.0 L627.6 84.0 L628.5 87.0 L629.5 90.0 L630.4 93.0 L631.3 96.0 L632.1 99.0 L633.0 102.0 L633.8 105.0 L634.6 108.0 L635.4 111.0 L636.2 114.0 L637.0 117.0 L637.7 120.0 L638.4 123.0 L639.2 126.0 L639.8 129.0 L640.5 132.0 L641.2 135.0 L641.8 138.0 L642.4 141.0 L643.0 144.0 L643.6 147.0 L644.2 150.0 L644.7 153.0 L645.3 156.0 L645.8 159.0 L646.3 162.0 L646.8 165.0 L647.2 168.0 L647.7 171.0 L648.1 174.0 L648.5 177.0 L648.9 180.0 L649.3 183.0 L649.7 186.0 L650.0 189.0 L650.4 192.0 L650.7 195.0 L651.0 198.0 L651.3 201.0 L651.6 204.0 L651.9 207.0 L652.1 210.0 L652.3 213.0 L652.6 216.0 L652.8 219.0 L653.0 222.0 L653.1 225.0 L653.3 228.0 L653.4 231.0 L653.6 234.0 L653.7 237.0 L653.8 240.0 L653.9 243.0 L654.0 246.0 L654.0 249.0 L654.1 252.0 L654.1 255.0 L654.1 258.0 L654.1 261.0 L654.1 264.0 L654.1 267.0 L654.1 270.0 L654.0 273.0 L654.0 276.0 L653.9 279.0 L653.8 282.0 L653.7 285.0 L653.6 288.0 L653.5 291.0 L653.3 294.0 L653.2 297.0 L653.0 300.0 L652.8 303.0 L652.6 306.0 L652.4 309.0 L652.2 312.0 L652.0 315.0 L651.8 318.0 L651.5 321.0 L651.2 324.0 L651.0 327.0 L650.7 330.0 L650.4 333.0 L650.0 336.0 L649.7 339.0 L649.4 342.0 L649.0 345.0 L648.6 348.0 L648.2 351.0 L647.9 354.0 L647.4 357.0 L647.0 360.0 L646.6 363.0 L646.1 366.0 L645.7 369.0 L645.2 372.0 L644.7 375.0 L644.2 378.0 L643.7 381.0 L643.2 384.0 L642.7 387.0 L642.1 390.0 L641.6 393.0 L641.0 396.0 L640.4 399.0 L639.8 402.0 L639.2 405.0 L638.6 408.0 L637.9 411.0 L637.3 414.0 L636.6 417.0 L636.0 420.0 L635.3 423.0 L634.6 426.0 L633.9 429.0 L633.1 432.0 L632.4 435.0 L631.6 438.0 L630.9 441.0 L630.1 444.0 L629.3 447.0 L628.5 450.0 L627.7 453.0 L626.9 456.0 L626.0 459.0 L625.1 462.0 L624.3 465.0 L623.4 468.0 L622.5 471.0 L621.6 474.0 L620.7 477.0 L619.7 480.0 L618.8 483.0 L617.8 486.0 L616.8 489.0 L615.8 492.0 L614.8 495.0 L613.8 498.0 L612.7 501.0 L611.7 504.0 L610.6 507.0 L609.5 510.0 L608.4 513.0 L607.3 516.0 L606.2 519.0 L605.0 522.0 L603.9 525.0 L602.7 528.0 L601.5 531.0 L600.3 534.0 L599.1 537.0 L597.9 540.0 L596.6 543.0 L595.4 546.0 L594.1 549.0 L592.8 552.0 L591.5 555.0 L590.1 558.0 L588.8 561.0 L587.4 564.0 L586.1 567.0 L584.7 570.0 L583.2 573.0 L581.8 576.0 L580.4 579.0 L578.9 582.0 L577.4 585.0 L575.9 588.0 L574.4 591.0 L572.9 594.0 L571.3 597.0 L569.8 600.0 L568.2 603.0 L566.6 606.0 L565.0 609.0 L563.3 612.0 L561.7 615.0" stroke="#7a2a60" stroke-width="5" filter="url(#b2)"/>
      <path d="M640.2 400.0 L639.6 403.0 L639.0 406.0 L638.4 409.0 L637.7 412.0 L637.1 415.0 L636.4 418.0 L635.7 421.0 L635.0 424.0 L634.3 427.0 L633.6 430.0 L632.9 433.0 L632.1 436.0 L631.4 439.0 L630.6 442.0 L629.8 445.0 L629.0 448.0 L628.2 451.0 L627.4 454.0 L626.6 457.0 L625.7 460.0 L624.9 463.0 L624.0 466.0 L623.1 469.0 L622.2 472.0 L621.3 475.0 L620.3 478.0 L619.4 481.0 L618.4 484.0 L617.5 487.0 L616.5 490.0 L615.5 493.0 L614.5 496.0 L613.4 499.0 L612.4 502.0 L611.3 505.0 L610.2 508.0 L609.2 511.0 L608.1 514.0 L606.9 517.0 L605.8 520.0 L604.7 523.0 L603.5 526.0 L602.3 529.0 L601.1 532.0 L599.9 535.0 L598.7 538.0 L597.5 541.0 L596.2 544.0 L594.9 547.0 L593.6 550.0 L592.3 553.0 L591.0 556.0 L589.7 559.0 L588.3 562.0 L587.0 565.0 L585.6 568.0 L584.2 571.0 L582.8 574.0 L581.3 577.0 L579.9 580.0 L578.4 583.0 L576.9 586.0 L575.4 589.0 L573.9 592.0 L572.4 595.0 L570.8 598.0 L569.3 601.0 L567.7 604.0 L566.1 607.0 L564.4 610.0 L562.8 613.0 L561.7 615.0" stroke="#a83050" stroke-width="3.5" filter="url(#b1)" opacity="0.8"/>
      <path d="M592.2 0.0 L593.7 3.0 L595.3 6.0 L596.8 9.0 L598.3 12.0 L599.8 15.0 L601.3 18.0 L602.7 21.0 L604.1 24.0 L605.5 27.0 L606.8 30.0 L608.2 33.0 L609.5 36.0 L610.8 39.0 L612.1 42.0 L613.3 45.0 L614.5 48.0 L615.7 51.0 L616.9 54.0 L618.1 57.0 L619.2 60.0 L620.3 63.0 L621.4 66.0 L622.5 69.0 L623.6 72.0 L624.6 75.0 L625.6 78.0 L626.6 81.0 L627.6 84.0 L628.5 87.0 L629.5 90.0 L630.4 93.0 L631.3 96.0 L632.1 99.0 L633.0 102.0 L633.8 105.0 L634.6 108.0 L635.4 111.0 L636.2 114.0 L637.0 117.0 L637.7 120.0 L638.4 123.0 L639.2 126.0 L639.8 129.0 L640.5 132.0 L641.2 135.0 L641.8 138.0 L642.4 141.0 L643.0 144.0 L643.6 147.0 L644.2 150.0 L644.7 153.0 L645.3 156.0 L645.8 159.0 L646.3 162.0 L646.8 165.0 L647.2 168.0 L647.7 171.0 L648.1 174.0 L648.5 177.0 L648.9 180.0 L649.3 183.0 L649.7 186.0 L650.0 189.0 L650.4 192.0 L650.7 195.0 L651.0 198.0 L651.3 201.0 L651.6 204.0 L651.9 207.0 L652.1 210.0 L652.3 213.0 L652.6 216.0 L652.8 219.0 L653.0 222.0 L653.1 225.0 L653.3 228.0 L653.4 231.0 L653.6 234.0 L653.7 237.0 L653.8 240.0 L653.9 243.0 L654.0 246.0 L654.0 249.0 L654.1 252.0 L654.1 255.0 L654.1 258.0 L654.1 261.0 L654.1 264.0 L654.1 267.0 L654.1 270.0 L654.0 273.0 L654.0 276.0 L653.9 279.0 L653.8 282.0 L653.7 285.0 L653.6 288.0 L653.5 291.0 L653.3 294.0 L653.2 297.0 L653.0 300.0 L652.8 303.0 L652.6 306.0 L652.4 309.0 L652.2 312.0 L652.0 315.0 L651.8 318.0 L651.5 321.0 L651.2 324.0 L651.0 327.0 L650.7 330.0 L650.4 333.0 L650.0 336.0 L649.7 339.0 L649.4 342.0 L649.0 345.0 L648.6 348.0 L648.2 351.0 L647.9 354.0 L647.4 357.0 L647.0 360.0 L646.6 363.0 L646.1 366.0 L645.7 369.0 L645.2 372.0 L644.7 375.0 L644.2 378.0 L643.7 381.0 L643.2 384.0 L642.7 387.0 L642.1 390.0 L641.6 393.0 L641.0 396.0 L640.4 399.0 L639.8 402.0 L639.2 405.0 L638.6 408.0 L637.9 411.0 L637.3 414.0 L636.6 417.0 L636.0 420.0 L635.3 423.0 L634.6 426.0 L633.9 429.0 L633.1 432.0 L632.4 435.0 L631.6 438.0 L630.9 441.0 L630.1 444.0 L629.3 447.0 L628.5 450.0 L627.7 453.0 L626.9 456.0 L626.0 459.0 L625.1 462.0 L624.3 465.0 L623.4 468.0 L622.5 471.0 L621.6 474.0 L620.7 477.0 L619.7 480.0 L618.8 483.0 L617.8 486.0 L616.8 489.0 L615.8 492.0 L614.8 495.0 L613.8 498.0 L612.7 501.0 L611.7 504.0 L610.6 507.0 L609.5 510.0 L608.4 513.0 L607.3 516.0 L606.2 519.0 L605.0 522.0 L603.9 525.0 L602.7 528.0 L601.5 531.0 L600.3 534.0 L599.1 537.0 L597.9 540.0 L596.6 543.0 L595.4 546.0 L594.1 549.0 L592.8 552.0 L591.5 555.0 L590.1 558.0 L588.8 561.0 L587.4 564.0 L586.1 567.0 L584.7 570.0 L583.2 573.0 L581.8 576.0 L580.4 579.0 L578.9 582.0 L577.4 585.0 L575.9 588.0 L574.4 591.0 L572.9 594.0 L571.3 597.0 L569.8 600.0 L568.2 603.0 L566.6 606.0 L565.0 609.0 L563.3 612.0 L561.7 615.0" stroke="url(#gr1)" stroke-width="1.8"/>
      <path d="M681.3 0.0 L682.1 3.0 L683.0 6.0 L683.8 9.0 L684.7 12.0 L685.5 15.0 L686.3 18.0 L687.1 21.0 L687.9 24.0 L688.7 27.0 L689.5 30.0 L690.3 33.0 L691.1 36.0 L691.9 39.0 L692.7 42.0 L693.4 45.0 L694.2 48.0 L694.9 51.0 L695.6 54.0 L696.4 57.0 L697.1 60.0 L697.8 63.0 L698.5 66.0 L699.2 69.0 L699.9 72.0 L700.6 75.0 L701.3 78.0 L701.9 81.0 L702.6 84.0 L703.2 87.0 L703.9 90.0 L704.5 93.0 L705.1 96.0 L705.7 99.0 L706.3 102.0 L706.9 105.0 L707.5 108.0 L708.1 111.0 L708.6 114.0 L709.2 117.0 L709.7 120.0 L710.3 123.0 L710.8 126.0 L711.3 129.0 L711.8 132.0 L712.3 135.0 L712.8 138.0 L713.3 141.0 L713.8 144.0 L714.2 147.0 L714.7 150.0 L715.1 153.0 L715.5 156.0 L715.9 159.0 L716.4 162.0 L716.7 165.0 L717.1 168.0 L717.5 171.0 L717.9 174.0 L718.2 177.0 L718.6 180.0 L718.9 183.0 L719.2 186.0 L719.5 189.0 L719.8 192.0 L720.1 195.0 L720.4 198.0 L720.7 201.0 L720.9 204.0 L721.2 207.0 L721.4 210.0 L721.6 213.0 L721.8 216.0 L722.0 219.0 L722.2 222.0 L722.4 225.0 L722.6 228.0 L722.7 231.0 L722.9 234.0 L723.0 237.0 L723.1 240.0 L723.2 243.0 L723.3 246.0 L723.4 249.0 L723.5 252.0 L723.5 255.0 L723.6 258.0 L723.6 261.0 L723.7 264.0 L723.7 267.0 L723.7 270.0 L723.7 273.0 L723.7 276.0 L723.6 279.0 L723.6 282.0 L723.5 285.0 L723.5 288.0 L723.4 291.0 L723.3 294.0 L723.2 297.0 L723.1 300.0 L723.0 303.0 L722.8 306.0 L722.7 309.0 L722.5 312.0 L722.3 315.0 L722.2 318.0 L722.0 321.0 L721.8 324.0 L721.5 327.0 L721.3 330.0 L721.1 333.0 L720.8 336.0 L720.5 339.0 L720.3 342.0 L720.0 345.0 L719.7 348.0 L719.4 351.0 L719.0 354.0 L718.7 357.0 L718.4 360.0 L718.0 363.0 L717.6 366.0 L717.3 369.0 L716.9 372.0 L716.5 375.0 L716.0 378.0 L715.6 381.0 L715.2 384.0 L714.7 387.0 L714.3 390.0 L713.8 393.0 L713.3 396.0 L712.8 399.0 L712.3 402.0 L711.8 405.0 L711.3 408.0 L710.7 411.0 L710.2 414.0 L709.6 417.0 L709.0 420.0 L708.4 423.0 L707.9 426.0 L707.2 429.0 L706.6 432.0 L706.0 435.0 L705.4 438.0 L704.7 441.0 L704.1 444.0 L703.4 447.0 L702.7 450.0 L702.0 453.0 L701.3 456.0 L700.6 459.0 L699.9 462.0 L699.2 465.0 L698.4 468.0 L697.7 471.0 L696.9 474.0 L696.1 477.0 L695.3 480.0 L694.6 483.0 L693.8 486.0 L692.9 489.0 L692.1 492.0 L691.3 495.0 L690.5 498.0 L689.6 501.0 L688.7 504.0 L687.9 507.0 L687.0 510.0 L686.1 513.0 L685.2 516.0 L684.3 519.0 L683.4 522.0 L682.5 525.0 L681.6 528.0 L680.6 531.0 L679.7 534.0 L678.7 537.0 L677.7 540.0 L676.8 543.0 L675.8 546.0 L674.8 549.0 L673.8 552.0 L672.8 555.0 L671.8 558.0 L670.8 561.0 L669.7 564.0 L668.7 567.0 L667.7 570.0 L666.6 573.0 L665.6 576.0 L664.5 579.0 L663.4 582.0 L662.4 585.0 L661.3 588.0 L660.2 591.0 L659.1 594.0 L658.0 597.0 L656.9 600.0 L655.7 603.0 L654.6 606.0 L653.5 609.0 L652.4 612.0 L651.2 615.0" stroke="#c84438" stroke-width="4" filter="url(#b1)" transform="translate(1.5,0)"/>
      <path d="M681.3 0.0 L682.1 3.0 L683.0 6.0 L683.8 9.0 L684.7 12.0 L685.5 15.0 L686.3 18.0 L687.1 21.0 L687.9 24.0 L688.7 27.0 L689.5 30.0 L690.3 33.0 L691.1 36.0 L691.9 39.0 L692.7 42.0 L693.4 45.0 L694.2 48.0 L694.9 51.0 L695.6 54.0 L696.4 57.0 L697.1 60.0 L697.8 63.0 L698.5 66.0 L699.2 69.0 L699.9 72.0 L700.6 75.0 L701.3 78.0 L701.9 81.0 L702.6 84.0 L703.2 87.0 L703.9 90.0 L704.5 93.0 L705.1 96.0 L705.7 99.0 L706.3 102.0 L706.9 105.0 L707.5 108.0 L708.1 111.0 L708.6 114.0 L709.2 117.0 L709.7 120.0 L710.3 123.0 L710.8 126.0 L711.3 129.0 L711.8 132.0 L712.3 135.0 L712.8 138.0 L713.3 141.0 L713.8 144.0 L714.2 147.0 L714.7 150.0 L715.1 153.0 L715.5 156.0 L715.9 159.0 L716.4 162.0 L716.7 165.0 L717.1 168.0 L717.5 171.0 L717.9 174.0 L718.2 177.0 L718.6 180.0 L718.9 183.0 L719.2 186.0 L719.5 189.0 L719.8 192.0 L720.1 195.0 L720.4 198.0 L720.7 201.0 L720.9 204.0 L721.2 207.0 L721.4 210.0 L721.6 213.0 L721.8 216.0 L722.0 219.0 L722.2 222.0 L722.4 225.0 L722.6 228.0 L722.7 231.0 L722.9 234.0 L723.0 237.0 L723.1 240.0 L723.2 243.0 L723.3 246.0 L723.4 249.0 L723.5 252.0 L723.5 255.0 L723.6 258.0 L723.6 261.0 L723.7 264.0 L723.7 267.0 L723.7 270.0 L723.7 273.0 L723.7 276.0 L723.6 279.0 L723.6 282.0 L723.5 285.0 L723.5 288.0 L723.4 291.0 L723.3 294.0 L723.2 297.0 L723.1 300.0 L723.0 303.0 L722.8 306.0 L722.7 309.0 L722.5 312.0 L722.3 315.0 L722.2 318.0 L722.0 321.0 L721.8 324.0 L721.5 327.0 L721.3 330.0 L721.1 333.0 L720.8 336.0 L720.5 339.0 L720.3 342.0 L720.0 345.0 L719.7 348.0 L719.4 351.0 L719.0 354.0 L718.7 357.0 L718.4 360.0 L718.0 363.0 L717.6 366.0 L717.3 369.0 L716.9 372.0 L716.5 375.0 L716.0 378.0 L715.6 381.0 L715.2 384.0 L714.7 387.0 L714.3 390.0 L713.8 393.0 L713.3 396.0 L712.8 399.0 L712.3 402.0 L711.8 405.0 L711.3 408.0 L710.7 411.0 L710.2 414.0 L709.6 417.0 L709.0 420.0 L708.4 423.0 L707.9 426.0 L707.2 429.0 L706.6 432.0 L706.0 435.0 L705.4 438.0 L704.7 441.0 L704.1 444.0 L703.4 447.0 L702.7 450.0 L702.0 453.0 L701.3 456.0 L700.6 459.0 L699.9 462.0 L699.2 465.0 L698.4 468.0 L697.7 471.0 L696.9 474.0 L696.1 477.0 L695.3 480.0 L694.6 483.0 L693.8 486.0 L692.9 489.0 L692.1 492.0 L691.3 495.0 L690.5 498.0 L689.6 501.0 L688.7 504.0 L687.9 507.0 L687.0 510.0 L686.1 513.0 L685.2 516.0 L684.3 519.0 L683.4 522.0 L682.5 525.0 L681.6 528.0 L680.6 531.0 L679.7 534.0 L678.7 537.0 L677.7 540.0 L676.8 543.0 L675.8 546.0 L674.8 549.0 L673.8 552.0 L672.8 555.0 L671.8 558.0 L670.8 561.0 L669.7 564.0 L668.7 567.0 L667.7 570.0 L666.6 573.0 L665.6 576.0 L664.5 579.0 L663.4 582.0 L662.4 585.0 L661.3 588.0 L660.2 591.0 L659.1 594.0 L658.0 597.0 L656.9 600.0 L655.7 603.0 L654.6 606.0 L653.5 609.0 L652.4 612.0 L651.2 615.0" stroke="#e09858" stroke-width="2.4"/>
    </g>
  </g>
</svg>
<svg style="position:absolute;left:40px;top:535px" width="24" height="24" viewBox="40 535 24 24">
  <g filter="url(#lb)" transform="translate(52.8 547.4) scale(0.9) translate(-52.8 -547.4)">
    <path d="M47.4 540.6 Q49.6 537.8 52 540 L51.6 544.2 Q48.6 544.6 47.4 542.6 Z" fill="#e05464"/>
    <path d="M52.8 541.6 Q53.6 538.8 56.6 538.8 L60 538.6 L59.6 544 L56.4 544.2 L54.6 543 Z" fill="#f0c450"/>
    <path d="M55.8 545 L59.6 544.8 L62.4 549.6 L60 551 L57 549.4 Z" fill="#80c44a"/>
    <path d="M49.6 552 L53.4 549.4 L56 551 L54.6 555.4 L51.4 554.2 Z" fill="#40b4ea"/>
    <path d="M43.6 547.2 L47 545 L50.4 546.6 L49.4 550.2 L46 549.8 Z" fill="#3074d0"/>
  </g>
</svg>
<div style="position:absolute;left:64px;top:539.3px;font-size:14.5px;line-height:17px;letter-spacing:0.1px;color:#f4f4f6;-webkit-text-stroke:0.5px #f4f4f6;">AlmaLinux</div>
<div id="bar">
  <svg style="position:absolute;left:14px;top:2px" width="22" height="22" viewBox="14 2 22 22">
    <g filter="url(#lb)" transform="translate(24.4 12.9) scale(0.85) translate(-24.4 -12.4)">
    <path d="M18.6 6.2 Q20.8 3.6 23.2 5.6 L22.8 9.8 Q19.8 10.2 18.6 8.2 Z" fill="#e05464"/>
    <path d="M24 7.2 Q24.8 4.4 27.8 4.4 L31 4.2 L30.6 9.6 L27.6 9.8 L25.8 8.6 Z" fill="#f0c450"/>
    <path d="M26.8 10.6 L30.6 10.4 L33 15.2 L30.8 16.6 L28 15 Z" fill="#80c44a"/>
    <path d="M20.8 17.4 L24.6 14.8 L27.2 16.4 L25.8 20.6 L22.6 19.6 Z" fill="#40b4ea"/>
    <path d="M15.8 12.6 L19.2 10.4 L22.6 12 L21.6 15.6 L18.2 15.2 Z" fill="#3074d0"/>
    </g>
  </svg>
  <div style="position:absolute;left:43px;top:9px;width:22.5px;height:6.5px;border-radius:4px;background:#fff"></div>
  <div style="position:absolute;left:70.5px;top:10.5px;width:4px;height:4px;border-radius:50%;background:#8a8a8a"></div>
  <div class="clock" style="left:352px">Jun 22</div>
  <div class="clock" style="left:403.5px">2:34 PM</div>
  <svg style="position:absolute;left:728px;top:3px" width="60" height="20" viewBox="728 3 60 20">
    <g fill="#f4f4f4">
      <rect x="736.5" y="6" width="3.5" height="3.5"/>
      <rect x="737.8" y="9" width="1" height="3.5"/>
      <rect x="731.5" y="12" width="12.5" height="1.2"/>
      <rect x="732.5" y="12" width="1" height="3"/>
      <rect x="741.5" y="12" width="1" height="3"/>
      <rect x="731" y="14.5" width="4.2" height="4.5"/>
      <rect x="739.5" y="14.5" width="4.5" height="4.5"/>
      <path d="M753.3 10.5 L755.5 10.5 L758.5 7.8 L758.5 17.5 L755.5 14.8 L753.3 14.8 Z"/>
    </g>
    <g fill="none" stroke="#f4f4f4" stroke-width="1.5" stroke-linecap="round">
      <path d="M760.5 10.5 Q761.6 12.6 760.5 14.8"/>
      <path d="M763 8.8 Q765.5 12.6 763 16.5"/>
      <path d="M778.4 9 A5 5 0 1 0 784 9"/>
      <path d="M781.2 6 L781.2 11.6"/>
    </g>
  </svg>
</div>
<div id="win">
  <div id="hdr">
    <svg style="position:absolute;left:12px;top:12px" width="13" height="13" viewBox="0 0 13 13">
      <rect x="0.9" y="0.9" width="11.2" height="11.2" rx="2" fill="none" stroke="#333" stroke-width="1.5"/>
      <path d="M6.5 3.5 V9.5 M3.5 6.5 H9.5" stroke="#333" stroke-width="1.5"/>
    </svg>
    <div id="title">phoronix@localhost:~</div>
    <div id="sub">~</div>
    <svg style="position:absolute;left:428px;top:13px" width="12" height="12" viewBox="0 0 12 12">
      <g fill="#333"><rect x="0" y="0" width="5" height="5" rx="0.6"/><rect x="6.5" y="0" width="5" height="5" rx="0.6"/><rect x="0" y="6.5" width="5" height="5" rx="0.6"/><rect x="6.5" y="6.5" width="5" height="5" rx="0.6"/></g>
    </svg>
    <svg style="position:absolute;left:459px;top:13px" width="13" height="12" viewBox="0 0 13 12">
      <g fill="#333"><rect x="0" y="0.6" width="12" height="1.3"/><rect x="0" y="4.8" width="12" height="1.3"/><rect x="0" y="8.9" width="12" height="1.3"/></g>
    </svg>
    <div style="position:absolute;left:487px;top:8.5px;width:19px;height:19px;border-radius:50%;background:#ebebeb"></div>
    <svg style="position:absolute;left:487px;top:8.5px" width="19" height="19" viewBox="0 0 19 19">
      <path d="M6.3 6.3 L12.7 12.7 M12.7 6.3 L6.3 12.7" stroke="#2e2e2e" stroke-width="1.6"/>
    </svg>
  </div>
  <div id="term"><span class="g">phoronix@localhost:~</span>$ cat /etc/redhat-release
AlmaLinux release 10.0 (Purple Lion)
<span class="g">phoronix@localhost:~</span>$ </div>
  <div id="cursor"></div>
</div>
</body></html>
